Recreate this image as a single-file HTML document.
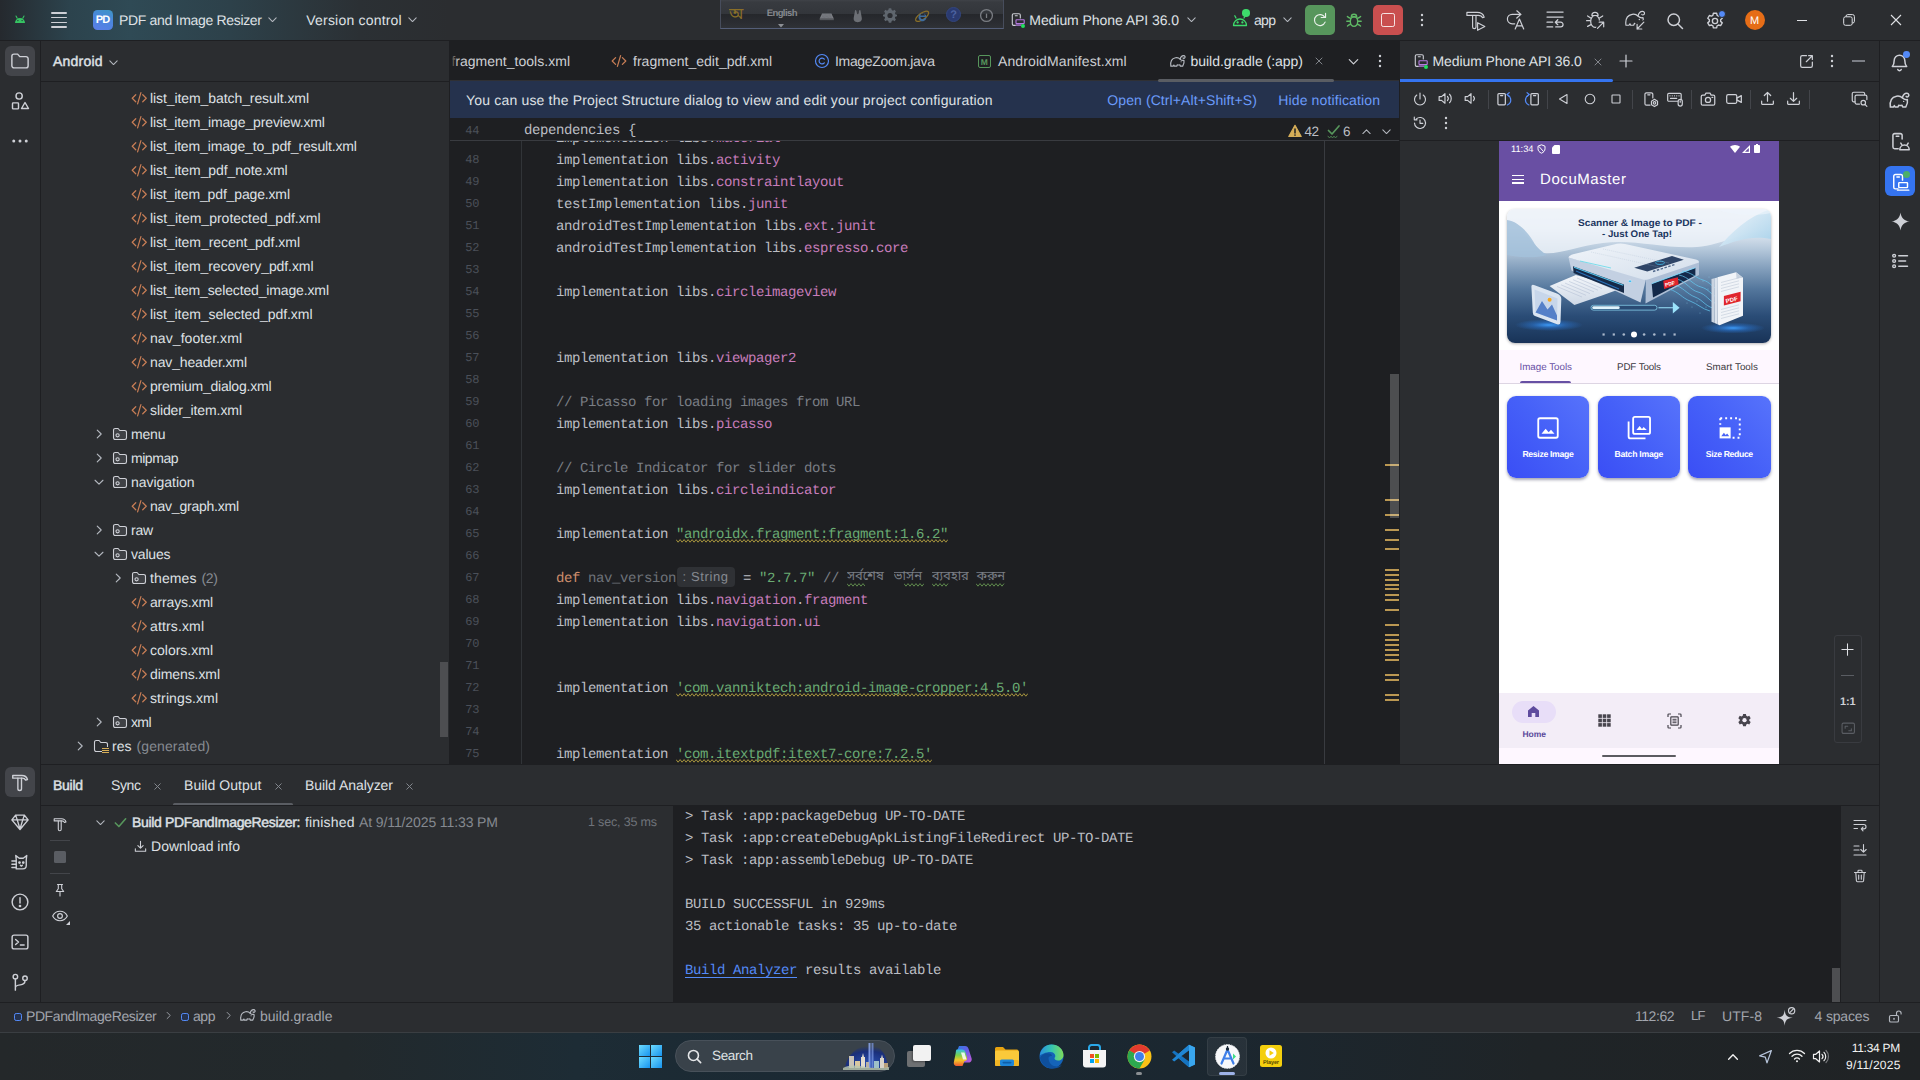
<!DOCTYPE html>
<html lang="en"><head><meta charset="utf-8"><title>build.gradle (:app) - PDF and Image Resizer</title>
<style>
html,body{margin:0;padding:0;background:#1E1F22;}
body{width:1920px;height:1080px;overflow:hidden;position:relative;font-family:"Liberation Sans",sans-serif;font-size:13.5px;color:#DFE1E5;text-rendering:geometricPrecision;}
#r{position:absolute;left:0;top:0;width:1920px;height:1080px;overflow:hidden;}
#r div,#r span,#r svg{position:absolute;box-sizing:border-box;}
#r span{white-space:pre;}
#r .rel, #r .rel *{position:static;}
</style></head>
<body><div id="r">
<div style="left:0px;top:0px;width:1920px;height:1080px;background:#2B2D30;"></div>
<div style="left:0px;top:0px;width:470px;height:40px;background:linear-gradient(90deg,#25292e 0px,#2c434d 70px,#2f4a55 130px,#2d414a 230px,#2b3034 360px,#2B2D30 450px);"></div>
<div style="left:0px;top:40px;width:1920px;height:1px;background:#1E1F22;"></div>
<div style="left:40px;top:41px;width:1px;height:962px;background:#1E1F22;"></div>
<div style="left:1879px;top:41px;width:1px;height:962px;background:#1E1F22;"></div>
<div style="left:449px;top:41px;width:951px;height:724px;background:#1E1F22;"></div>
<div style="left:1399px;top:41px;width:1px;height:724px;background:#1E1F22;"></div>
<div style="left:41px;top:764px;width:1838px;height:1px;background:#1E1F22;"></div>
<div style="left:0px;top:1002px;width:1920px;height:1px;background:#1E1F22;"></div>
<svg style="left:14px;top:14px" width="12" height="10" viewBox="0 0 12 10"><path d="M1 9a5 5 0 0 1 10 0z" fill="#36c463"/><path d="M3.200 4.200 2 2M8.800 4.200 10 2" stroke="#36c463" stroke-width="1.100" stroke-linecap="round"/><circle cx="3.900" cy="6.600" r=".7" fill="#1f3a33"/><circle cx="8.100" cy="6.600" r=".7" fill="#1f3a33"/></svg>
<div style="left:51px;top:12px;width:16px;height:1.6px;background:#CED0D6;border-radius:1px;"></div>
<div style="left:51px;top:16.8px;width:16px;height:1.6px;background:#CED0D6;border-radius:1px;"></div>
<div style="left:51px;top:21.5px;width:16px;height:1.6px;background:#CED0D6;border-radius:1px;"></div>
<div style="left:51px;top:26.2px;width:16px;height:1.6px;background:#CED0D6;border-radius:1px;"></div>
<div style="left:93px;top:10px;width:20px;height:20px;border-radius:4.5px;background:linear-gradient(200deg,#3f96c4 0%,#4a86dd 45%,#5b7ee8 100%);"></div>
<span style="left:95.80px;top:12.20px;height:16px;line-height:16px;font-size:11px;color:#fff;font-weight:700;letter-spacing:-0.881px;">PD</span>
<span style="left:119.00px;top:10.30px;height:20px;line-height:20px;font-size:14px;color:#DFE1E5;letter-spacing:-0.320px;">PDF and Image Resizer</span>
<svg style="left:266.00px;top:13.30px;" width="13" height="13" viewBox="0 0 16 16" fill="none" stroke="#B4B8BF" stroke-width="1.3" stroke-linecap="round" stroke-linejoin="round"><path d="M3.5 6 8 10.5 12.5 6"/></svg>
<span style="left:306.30px;top:10.30px;height:20px;line-height:20px;font-size:14px;color:#DFE1E5;letter-spacing:0.199px;">Version control</span>
<svg style="left:405.50px;top:13.30px;" width="13" height="13" viewBox="0 0 16 16" fill="none" stroke="#B4B8BF" stroke-width="1.3" stroke-linecap="round" stroke-linejoin="round"><path d="M3.5 6 8 10.5 12.5 6"/></svg>
<div style="left:719.5px;top:-1px;width:284.5px;height:30px;border:1px solid #474d5c;border-bottom-color:#545e78;border-top:none;background:linear-gradient(180deg,#43464c 0px,#383b40 3px,#33363b 14.500px,#25272b 15px,#2b2d32 24px,#303338 30px);"></div>
<span style="left:729.00px;top:4.00px;height:22px;line-height:22px;font-size:16px;color:#8a6f28;font-family:'Liberation Sans','Noto Sans Bengali','FreeSans',sans-serif;width:17px;overflow:hidden;">অ</span>
<span style="left:766.70px;top:7.70px;height:12px;line-height:12px;font-size:9.5px;color:#85888e;font-weight:700;letter-spacing:-0.585px;">English</span>
<svg style="left:778px;top:23.500px" width="6" height="4" viewBox="0 0 6 4"><path d="M0 0h6L3 3.500z" fill="#8d9096"/></svg>
<svg style="left:818.500px;top:13px" width="15.500" height="8.500" viewBox="0 0 16 9"><path d="M3 .5h10L15.500 6H.5z" fill="#7b7e84"/><rect x=".5" y="6" width="15" height="1.600" fill="#54575c"/><path d="M3.500 2h9M3 3.500h10M2.500 5h11" stroke="#55585e" stroke-width=".5" stroke-dasharray=".8 .6"/></svg>
<svg style="left:852px;top:9px" width="11.500" height="14.500" viewBox="0 0 14 18"><path d="M3.500 2.500C3.500 1 5 1 5.500 2.500L6 5h2l.5-2.500c.5-1.500 2-1.500 2 0L12 11c.5 3-1 5.500-5 5.500S1.500 14 2 11z" fill="#6c6f75"/><rect x="6" y="1.500" width="2" height="5" rx="1" fill="#3a3c41"/></svg>
<svg style="left:881.50px;top:7.30px;" width="16" height="16" viewBox="0 0 16 16" fill="none" stroke="none" stroke-width="1.2" stroke-linecap="round" stroke-linejoin="round"><path d="M8 1.200 9.200 1.300 9.700 3.100 11 3.700 12.600 2.800 13.900 4.400 12.900 5.900 13.300 7.200 15 7.700 15 9.300 13.300 9.800 12.900 11.100 13.900 12.600 12.600 14.200 11 13.300 9.700 13.900 9.200 15.700 6.800 15.700 6.300 13.900 5 13.300 3.400 14.200 2.100 12.600 3.100 11.100 2.700 9.800 1 9.300 1 7.700 2.700 7.200 3.100 5.900 2.100 4.400 3.400 2.800 5 3.700 6.300 3.100 6.800 1.300z" fill="#5f666e" stroke="none"/><circle cx="8" cy="8.500" r="2.600" fill="#2b2d32" stroke="none"/></svg>
<svg style="left:913.500px;top:6.500px" width="17" height="17" viewBox="0 0 21 20"><ellipse cx="10" cy="11" rx="9.500" ry="4" transform="rotate(-35 10 11)" fill="none" stroke="#8a6f28" stroke-width="1.600"/><path d="M15.500 12H7.800a3 3 0 0 0 5.600 1.200h2a5 5 0 1 1 .1-1.200zM7.800 10h5.600a2.800 2.800 0 0 0-5.600 0z" fill="#3f6c9c"/></svg>
<div style="left:945.8px;top:7.2px;width:15px;height:15px;background:#2a3a70;border-radius:50%;border:1px solid #33467f;"></div>
<span style="left:950.30px;top:7.90px;height:14px;line-height:14px;font-size:11px;color:#4d63a0;font-weight:700;">?</span>
<svg style="left:978.70px;top:7.50px;" width="15" height="15" viewBox="0 0 16 16" fill="none" stroke="#7a7d83" stroke-width="1.4" stroke-linecap="round" stroke-linejoin="round"><circle cx="8" cy="8" r="6.300"/><path d="M8 6.500v3.500"/></svg>
<svg style="left:1009.70px;top:12.40px;" width="16" height="16" viewBox="0 0 16 16" fill="none" stroke="#CED0D6" stroke-width="1.1" stroke-linecap="round" stroke-linejoin="round"><path d="M5.300 13.400H3.600A1.300 1.300 0 0 1 2.300 12.100V3.100A1.300 1.300 0 0 1 3.600 1.800h5.400A1.300 1.300 0 0 1 10.300 3.100V6" stroke="#CED0D6"/><path d="M5.300 3.800h2" stroke="#CED0D6"/><rect x="6" y="7.800" width="8.200" height="3.800" rx=".5" stroke="#B57BE0"/><path d="M6 13.100h5.300" stroke="#B57BE0"/></svg><div style="left:1021.1px;top:24.099999999999998px;width:4.2px;height:4.2px;background:#22E05E;border-radius:50%;"></div>
<span style="left:1029.30px;top:10.30px;height:20px;line-height:20px;font-size:14px;color:#DFE1E5;letter-spacing:-0.065px;">Medium Phone API 36.0</span>
<svg style="left:1184.50px;top:13.30px;" width="13" height="13" viewBox="0 0 16 16" fill="none" stroke="#B4B8BF" stroke-width="1.3" stroke-linecap="round" stroke-linejoin="round"><path d="M3.5 6 8 10.5 12.5 6"/></svg>
<svg style="left:1232px;top:10px" width="18" height="17" viewBox="0 0 18 17" fill="none" stroke="#3DDC6B" stroke-width="1.300" stroke-linecap="round" stroke-linejoin="round"><path d="M1.500 15.500a6.500 6.500 0 0 1 13 0zM4 8 2.800 5.800M12 8l1.200-2.200"/><circle cx="5.600" cy="12.400" r=".5" fill="#3DDC6B"/><circle cx="10.400" cy="12.400" r=".5" fill="#3DDC6B"/></svg>
<div style="left:1242.3px;top:9.3px;width:7.5px;height:7.5px;background:#3DDC6B;border-radius:50%;"></div>
<span style="left:1254.00px;top:10.30px;height:20px;line-height:20px;font-size:14px;color:#DFE1E5;letter-spacing:-0.680px;">app</span>
<svg style="left:1280.50px;top:13.30px;" width="13" height="13" viewBox="0 0 16 16" fill="none" stroke="#B4B8BF" stroke-width="1.3" stroke-linecap="round" stroke-linejoin="round"><path d="M3.5 6 8 10.5 12.5 6"/></svg>
<div style="left:1305px;top:5px;width:30px;height:30px;background:#57965C;border-radius:5px;"></div>
<svg style="left:1312.00px;top:12.00px;" width="16" height="16" viewBox="0 0 16 16" fill="none" stroke="#e9f1ea" stroke-width="1.15" stroke-linecap="round" stroke-linejoin="round"><path d="M13.100 10.100A5.500 5.500 0 1 1 12.800 5.400"/><path d="M13.550 1.400V5.500H9.200"/></svg>
<svg style="left:1346.00px;top:12.00px;" width="16" height="16" viewBox="0 0 16 16" fill="none" stroke="#5FB865" stroke-width="1.4" stroke-linecap="round" stroke-linejoin="round"><ellipse cx="8" cy="9.600" rx="3.700" ry="4.800"/><path d="M5.300 4.900A2.700 2.700 0 0 1 10.700 4.900z"/><path d="M4.500 6.300C3.400 6 2.300 5.400 1.400 4.500M4.200 9.300H.8M4.600 12.300C3.500 12.600 2.400 13.200 1.500 14M11.500 6.300C12.600 6 13.700 5.400 14.600 4.500M11.800 9.300h3.400M11.400 12.300c1.100.3 2.200.9 3.100 1.700"/></svg>
<div style="left:1373px;top:5px;width:30px;height:30px;background:#C94F4F;border-radius:5px;"></div>
<div style="left:1381.2px;top:13.2px;width:13.6px;height:13.6px;border:1.600px solid #f6e3e3;border-radius:2.200px;"></div>
<svg style="left:1414.00px;top:12.00px;" width="16" height="16" viewBox="0 0 16 16" fill="none" stroke="#CED0D6" stroke-width="1.2" stroke-linecap="round" stroke-linejoin="round"><g fill="#CED0D6" stroke="none"><circle cx="8" cy="3" r="1.2"/><circle cx="8" cy="8" r="1.2"/><circle cx="8" cy="13" r="1.2"/></g></svg>
<svg style="left:1465.50px;top:10.50px;" width="20" height="20" viewBox="0 0 20 20" fill="none" stroke="#CED0D6" stroke-width="1.15" stroke-linecap="round" stroke-linejoin="round"><path d="M.9 1.400h10.300c3.300 0 6 1.700 7 4.700l-1.600.6c-.8-1.700-2.400-2.300-4.300-2.300H.9z"/><path d="M6.600 5v10.900a1.700 1.700 0 0 0 3.400 0V5"/><path d="M11.600 11.700v7.600l7.200-3.800z" fill="#2B2D30"/></svg>
<svg style="left:1505.00px;top:10.00px;" width="20" height="20" viewBox="0 0 20 20" fill="none" stroke="#CED0D6" stroke-width="1.2" stroke-linecap="round" stroke-linejoin="round"><path d="M15.900 4.400H7.100a4.700 4.700 0 0 0 0 9.400h2.600M11.800.8l4.100 3.600-4.100 3.600"/><path d="M10.200 19 14.450 9l4.250 10M11.700 15.800h5.500"/></svg>
<svg style="left:1545.00px;top:10.00px;" width="20" height="20" viewBox="0 0 20 20" fill="none" stroke="#CED0D6" stroke-width="1.25" stroke-linecap="round" stroke-linejoin="round"><path d="M2 2.100h16.100M2 7h16.100M2 12.200h5.700M2 16.900h5.700"/><path d="M10.500 12.200h5.200a2.350 2.350 0 0 1 0 4.700h-5M12.800 9.700l-2.500 2.500 2.500 2.500"/></svg>
<svg style="left:1585.00px;top:10.00px;" width="20" height="20" viewBox="0 0 20 20" fill="none" stroke="#CED0D6" stroke-width="1.2" stroke-linecap="round" stroke-linejoin="round"><path d="M6.900 5.500a3.100 3.100 0 0 1 6.200 0z"/><path d="M11.500 17.300c-.5.100-.9.100-1.400.100-2.400 0-4.400-2.700-4.400-6S7.700 5.500 10.100 5.500s4.400 2.600 4.400 5.500"/><path d="M5.700 8 2.600 5.900M5.200 10.700H1.600M6 14.600l-3.400 1.800M14.500 8l3.200-2.100"/><path d="M12.500 18.400l6.200-6.200M14.200 12.200h4.500v4.600" stroke="#2B2D30" stroke-width="3.600"/><path d="M12.500 18.400l6.200-6.200M14.200 12.200h4.500v4.600"/></svg>
<svg style="left:1625.00px;top:10.00px;" width="20" height="20" viewBox="0 0 20 20" fill="none" stroke="#CED0D6" stroke-width="1.2" stroke-linecap="round" stroke-linejoin="round"><g transform="translate(-1.400 -1.900) scale(1.380)" stroke-width=".85"><path d="M1.700 12.400C1.200 8.600 2.400 5.200 6.200 4.500 7.900 4.200 9.400 4.700 10.400 5.700 11.600 6.900 12.600 7.300 14.100 6.900 14.500 8.900 13.900 10.800 12.900 12.400H10.700L10.200 11.100C9.400 11.350 8.600 11.350 7.800 11.100L7.300 12.400H5.100L4.600 11.300 3.900 12.400Z"/><path d="M10.400 5.700C11 3.600 12.300 2.300 13.800 2.400 15.100 2.500 15.500 3.800 14.800 4.600 14.300 5.200 13.500 5.100 13.200 4.600"/><circle cx="11.400" cy="8.300" r=".5" fill="#CED0D6" stroke="none"/></g><path d="M18.850 12.200 12.100 19M12.100 14.300V19h4.700" stroke="#2B2D30" stroke-width="4"/><path d="M18.850 12.200 12.100 19M12.100 14.300V19h4.700"/></svg>
<svg style="left:1665.00px;top:10.50px;" width="20" height="20" viewBox="0 0 16 16" fill="none" stroke="#CED0D6" stroke-width="1.2" stroke-linecap="round" stroke-linejoin="round"><circle cx="7" cy="7" r="4.6"/><path d="M10.400 10.400l3.600 3.600"/></svg>
<svg style="left:1704.50px;top:10.50px;" width="20" height="20" viewBox="0 0 16 16" fill="none" stroke="#CED0D6" stroke-width="1.1" stroke-linecap="round" stroke-linejoin="round"><circle cx="8" cy="8" r="2.100"/><path d="M6.700 1.800h2.600l.4 1.700 1.100.6 1.700-.5 1.300 2.200-1.300 1.200v1.300l1.300 1.200-1.300 2.200-1.700-.5-1.100.6-.4 1.700H6.700l-.4-1.700-1.100-.6-1.700.5-1.300-2.200 1.300-1.200V7l-1.300-1.200 1.300-2.200 1.700.5 1.100-.6z"/></svg>
<div style="left:1718px;top:10px;width:8px;height:8px;background:#548AF7;border-radius:50%;border:1px solid #2B2D30;"></div>
<div style="left:1745px;top:10px;width:20px;height:20px;background:#E66D17;border-radius:50%;"></div>
<span style="left:1750.00px;top:14.10px;height:14px;line-height:14px;font-size:11px;color:#fff;">M</span>
<div style="left:1797px;top:19.5px;width:10px;height:1.2px;background:#DFE1E5;"></div>
<svg style="left:1843px;top:14px" width="12" height="12" viewBox="0 0 12 12" fill="none" stroke="#DFE1E5" stroke-width="1"><rect x=".7" y="2.800" width="8.500" height="8.500" rx="1.800"/><path d="M3 2.800V2.300A1.700 1.700 0 0 1 4.700.6h4.800a1.900 1.900 0 0 1 1.900 1.900v4.800a1.700 1.700 0 0 1-1.700 1.700h-.4"/></svg>
<svg style="left:1890px;top:14px" width="12" height="12" viewBox="0 0 12 12" fill="none" stroke="#DFE1E5" stroke-width="1.100"><path d="M1 1l10 10M11 1 1 11"/></svg>
<div style="left:5px;top:46px;width:30px;height:30px;background:#43454A;border-radius:6px;"></div>
<svg style="left:10.00px;top:51.00px;" width="20" height="20" viewBox="0 0 16 16" fill="none" stroke="#CED0D6" stroke-width="1.15" stroke-linecap="round" stroke-linejoin="round"><path d="M1.5 4.2A1.7 1.7 0 0 1 3.2 2.5h2.9l1.7 2h5A1.7 1.7 0 0 1 14.5 6.2v5.6a1.7 1.7 0 0 1-1.7 1.7H3.2a1.7 1.7 0 0 1-1.7-1.7z"/></svg>
<svg style="left:10.00px;top:91.00px;" width="20" height="20" viewBox="0 0 16 16" fill="none" stroke="#CED0D6" stroke-width="1.15" stroke-linecap="round" stroke-linejoin="round"><circle cx="7.3" cy="4" r="2.5"/><rect x="2" y="9.5" width="4.8" height="4.8" rx=".6"/><path d="M12 9.2 14.8 14H9.2z"/></svg>
<svg style="left:10.00px;top:131.00px;" width="20" height="20" viewBox="0 0 16 16" fill="none" stroke="#CED0D6" stroke-width="1.2" stroke-linecap="round" stroke-linejoin="round"><g fill="#CED0D6" stroke="none"><circle cx="3" cy="8" r="1.2"/><circle cx="8" cy="8" r="1.2"/><circle cx="13" cy="8" r="1.2"/></g></svg>
<div style="left:5px;top:767px;width:30px;height:30px;background:#43454A;border-radius:6px;"></div>
<svg style="left:10.00px;top:772.00px;" width="20" height="20" viewBox="0 0 16 16" fill="none" stroke="#CED0D6" stroke-width="1.1" stroke-linecap="round" stroke-linejoin="round"><path d="M2.200 2.800h7.300c2.300 0 3.900 1.200 4.500 3.200l-1.500.5c-.5-1.100-1.500-1.600-2.700-1.600H2.200z"/><path d="M6.300 5v8.300a1.450 1.450 0 0 0 2.900 0V5"/></svg>
<svg style="left:10.00px;top:812.00px;" width="20" height="20" viewBox="0 0 16 16" fill="none" stroke="#CED0D6" stroke-width="1.1" stroke-linecap="round" stroke-linejoin="round"><path d="M4.5 2.5h7L14.5 6.3 8 14 1.5 6.3zM1.5 6.3h13M5.8 6.3 8 13.6 10.2 6.3M4.5 2.5l1.3 3.8M11.5 2.5l-1.3 3.8"/></svg>
<svg style="left:10.00px;top:852.00px;" width="20" height="20" viewBox="0 0 16 16" fill="none" stroke="#CED0D6" stroke-width="1.1" stroke-linecap="round" stroke-linejoin="round"><path d="M5 13.5V6.2L4.6 2.8 7.4 5h3.2l2.8-2.2-.4 3.4v4.6a2.7 2.7 0 0 1-2.7 2.7z"/><path d="M1.5 7.2h3.3M1.5 9.8h3.3M1.5 12.4h3.3" /><circle cx="7.6" cy="8.4" r=".55" fill="#CED0D6"/><circle cx="10.6" cy="8.4" r=".55" fill="#CED0D6"/><path d="M8.3 10.6l.8.7.8-.7"/></svg>
<svg style="left:10.00px;top:892.00px;" width="20" height="20" viewBox="0 0 16 16" fill="none" stroke="#CED0D6" stroke-width="1.15" stroke-linecap="round" stroke-linejoin="round"><circle cx="8" cy="8" r="6.3"/><path d="M8 4.6v4.2"/><circle cx="8" cy="11.2" r=".5" fill="#CED0D6"/></svg>
<svg style="left:10.00px;top:932.00px;" width="20" height="20" viewBox="0 0 16 16" fill="none" stroke="#CED0D6" stroke-width="1.15" stroke-linecap="round" stroke-linejoin="round"><rect x="1.7" y="2.5" width="12.6" height="11" rx="1.6"/><path d="M4.5 6l2.3 2-2.3 2M8.3 10.4h3"/></svg>
<svg style="left:10.00px;top:972.00px;" width="20" height="20" viewBox="0 0 16 16" fill="none" stroke="#CED0D6" stroke-width="1.15" stroke-linecap="round" stroke-linejoin="round"><circle cx="4.300" cy="3.700" r="1.800"/><circle cx="12" cy="5" r="1.800"/><path d="M4.300 5.500v9M12 6.800c0 2.300-1.800 3.300-3.800 3.500-2 .2-3.900.6-3.900 2.200"/></svg>
<svg style="left:1888.30px;top:50.00px;" width="23" height="23" viewBox="0 0 16 16" fill="none" stroke="#CED0D6" stroke-width="1.05" stroke-linecap="round" stroke-linejoin="round"><path d="M3 11.5c1-1 1.3-2 1.3-4.2a3.7 3.7 0 0 1 7.4 0c0 2.200.3 3.200 1.300 4.200z"/><path d="M6.800 13.600a1.300 1.300 0 0 0 2.400 0" /></svg>
<div style="left:1903.3px;top:51px;width:6.8px;height:6.8px;background:#548AF7;border-radius:50%;"></div>
<svg style="left:1888.30px;top:90.30px;" width="22" height="22" viewBox="0 0 16 16" fill="none" stroke="#CED0D6" stroke-width="1.1" stroke-linecap="round" stroke-linejoin="round"><path d="M1.700 12.400C1.200 8.600 2.400 5.200 6.200 4.500 7.900 4.200 9.400 4.700 10.400 5.700 11.600 6.900 12.600 7.300 14.100 6.900 14.500 8.900 13.900 10.800 12.900 12.400H10.700L10.200 11.100C9.400 11.350 8.600 11.350 7.800 11.100L7.300 12.400H5.100L4.600 11.300 3.900 12.400Z"/><path d="M10.400 5.700C11 3.600 12.300 2.300 13.800 2.400 15.100 2.500 15.500 3.800 14.800 4.600 14.300 5.200 13.500 5.100 13.200 4.600"/><circle cx="11.400" cy="8.300" r=".5" fill="#CED0D6" stroke="none"/></svg>
<svg style="left:1888.80px;top:131.00px;" width="21" height="21" viewBox="0 0 16 16" fill="none" stroke="#CED0D6" stroke-width="1.15" stroke-linecap="round" stroke-linejoin="round"><path d="M7 13.500H4.300A1.300 1.300 0 0 1 3 12.200V3.300A1.300 1.300 0 0 1 4.300 2h4.400A1.300 1.300 0 0 1 10 3.300V6M5.500 4h2"/><path d="M8.200 14.300a3.600 3.600 0 0 1 7.200 0zM9.800 10.500l-.8-1.300M13.800 10.500l.8-1.300"/></svg>
<div style="left:1885px;top:166px;width:30px;height:30px;background:#3574F0;border-radius:6px;"></div>
<svg style="left:1890.00px;top:171.50px;" width="20" height="20" viewBox="0 0 16 16" fill="none" stroke="#fff" stroke-width="1.15" stroke-linecap="round" stroke-linejoin="round"><path d="M6.500 13.500H4.300A1.300 1.300 0 0 1 3 12.200V3.300A1.300 1.300 0 0 1 4.300 2h4.400A1.300 1.300 0 0 1 10 3.300V6.500M5.500 4h2"/><rect x="7" y="8.500" width="7" height="4" rx=".5"/><path d="M6 14.500h9"/></svg>
<div style="left:1903px;top:171px;width:7px;height:7px;background:#4CAF6A;border-radius:50%;"></div>
<svg style="left:1890.500px;top:212px" width="19" height="19" viewBox="0 0 20 20"><path d="M10 .5C10.600 6 14 9.400 19.500 10 14 10.600 10.600 14 10 19.500 9.400 14 6 10.600 .5 10 6 9.400 9.400 6 10 .5z" fill="#CED0D6"/></svg>
<svg style="left:1890.00px;top:251.00px;" width="20" height="20" viewBox="0 0 16 16" fill="none" stroke="#CED0D6" stroke-width="1.15" stroke-linecap="round" stroke-linejoin="round"><circle cx="3.300" cy="3.800" r="1.100"/><circle cx="3.300" cy="8" r="1.100"/><circle cx="3.300" cy="12.200" r="1.100"/><path d="M7 3.800h7M7 8h5.500M7 12.200h7"/></svg>
<span style="left:53.00px;top:51.00px;height:20px;line-height:20px;font-size:14px;color:#DFE1E5;letter-spacing:0.207px;-webkit-text-stroke:.45px #DFE1E5;">Android</span>
<svg style="left:106.50px;top:55.50px;" width="13" height="13" viewBox="0 0 16 16" fill="none" stroke="#B4B8BF" stroke-width="1.3" stroke-linecap="round" stroke-linejoin="round"><path d="M3.5 6 8 10.5 12.5 6"/></svg>
<div style="left:41px;top:81px;width:408px;height:1px;background:#1E1F22;"></div>
<svg style="left:130.75px;top:89.75px;" width="16.5" height="16.5" viewBox="0 0 16 16" fill="none" stroke="#C77D55" stroke-width="1.2" stroke-linecap="round" stroke-linejoin="round"><path d="M4.6 4.6 1.2 8l3.4 3.4M11.4 4.6 14.8 8l-3.4 3.4M9.6 2.6 6.4 13.4"/></svg>
<span style="left:150.00px;top:88.40px;height:20px;line-height:20px;font-size:14px;color:#DFE1E5;letter-spacing:-0.083px;">list_item_batch_result.xml</span>
<svg style="left:130.75px;top:113.75px;" width="16.5" height="16.5" viewBox="0 0 16 16" fill="none" stroke="#C77D55" stroke-width="1.2" stroke-linecap="round" stroke-linejoin="round"><path d="M4.6 4.6 1.2 8l3.4 3.4M11.4 4.6 14.8 8l-3.4 3.4M9.6 2.6 6.4 13.4"/></svg>
<span style="left:150.00px;top:112.40px;height:20px;line-height:20px;font-size:14px;color:#DFE1E5;letter-spacing:-0.123px;">list_item_image_preview.xml</span>
<svg style="left:130.75px;top:137.75px;" width="16.5" height="16.5" viewBox="0 0 16 16" fill="none" stroke="#C77D55" stroke-width="1.2" stroke-linecap="round" stroke-linejoin="round"><path d="M4.6 4.6 1.2 8l3.4 3.4M11.4 4.6 14.8 8l-3.4 3.4M9.6 2.6 6.4 13.4"/></svg>
<span style="left:150.00px;top:136.40px;height:20px;line-height:20px;font-size:14px;color:#DFE1E5;letter-spacing:-0.146px;">list_item_image_to_pdf_result.xml</span>
<svg style="left:130.75px;top:161.75px;" width="16.5" height="16.5" viewBox="0 0 16 16" fill="none" stroke="#C77D55" stroke-width="1.2" stroke-linecap="round" stroke-linejoin="round"><path d="M4.6 4.6 1.2 8l3.4 3.4M11.4 4.6 14.8 8l-3.4 3.4M9.6 2.6 6.4 13.4"/></svg>
<span style="left:150.00px;top:160.40px;height:20px;line-height:20px;font-size:14px;color:#DFE1E5;letter-spacing:-0.076px;">list_item_pdf_note.xml</span>
<svg style="left:130.75px;top:185.75px;" width="16.5" height="16.5" viewBox="0 0 16 16" fill="none" stroke="#C77D55" stroke-width="1.2" stroke-linecap="round" stroke-linejoin="round"><path d="M4.6 4.6 1.2 8l3.4 3.4M11.4 4.6 14.8 8l-3.4 3.4M9.6 2.6 6.4 13.4"/></svg>
<span style="left:150.00px;top:184.40px;height:20px;line-height:20px;font-size:14px;color:#DFE1E5;letter-spacing:-0.152px;">list_item_pdf_page.xml</span>
<svg style="left:130.75px;top:209.75px;" width="16.5" height="16.5" viewBox="0 0 16 16" fill="none" stroke="#C77D55" stroke-width="1.2" stroke-linecap="round" stroke-linejoin="round"><path d="M4.6 4.6 1.2 8l3.4 3.4M11.4 4.6 14.8 8l-3.4 3.4M9.6 2.6 6.4 13.4"/></svg>
<span style="left:150.00px;top:208.40px;height:20px;line-height:20px;font-size:14px;color:#DFE1E5;letter-spacing:0.003px;">list_item_protected_pdf.xml</span>
<svg style="left:130.75px;top:233.75px;" width="16.5" height="16.5" viewBox="0 0 16 16" fill="none" stroke="#C77D55" stroke-width="1.2" stroke-linecap="round" stroke-linejoin="round"><path d="M4.6 4.6 1.2 8l3.4 3.4M11.4 4.6 14.8 8l-3.4 3.4M9.6 2.6 6.4 13.4"/></svg>
<span style="left:150.00px;top:232.40px;height:20px;line-height:20px;font-size:14px;color:#DFE1E5;letter-spacing:-0.042px;">list_item_recent_pdf.xml</span>
<svg style="left:130.75px;top:257.75px;" width="16.5" height="16.5" viewBox="0 0 16 16" fill="none" stroke="#C77D55" stroke-width="1.2" stroke-linecap="round" stroke-linejoin="round"><path d="M4.6 4.6 1.2 8l3.4 3.4M11.4 4.6 14.8 8l-3.4 3.4M9.6 2.6 6.4 13.4"/></svg>
<span style="left:150.00px;top:256.40px;height:20px;line-height:20px;font-size:14px;color:#DFE1E5;letter-spacing:-0.089px;">list_item_recovery_pdf.xml</span>
<svg style="left:130.75px;top:281.75px;" width="16.5" height="16.5" viewBox="0 0 16 16" fill="none" stroke="#C77D55" stroke-width="1.2" stroke-linecap="round" stroke-linejoin="round"><path d="M4.6 4.6 1.2 8l3.4 3.4M11.4 4.6 14.8 8l-3.4 3.4M9.6 2.6 6.4 13.4"/></svg>
<span style="left:150.00px;top:280.40px;height:20px;line-height:20px;font-size:14px;color:#DFE1E5;letter-spacing:-0.143px;">list_item_selected_image.xml</span>
<svg style="left:130.75px;top:305.75px;" width="16.5" height="16.5" viewBox="0 0 16 16" fill="none" stroke="#C77D55" stroke-width="1.2" stroke-linecap="round" stroke-linejoin="round"><path d="M4.6 4.6 1.2 8l3.4 3.4M11.4 4.6 14.8 8l-3.4 3.4M9.6 2.6 6.4 13.4"/></svg>
<span style="left:150.00px;top:304.40px;height:20px;line-height:20px;font-size:14px;color:#DFE1E5;letter-spacing:-0.068px;">list_item_selected_pdf.xml</span>
<svg style="left:130.75px;top:329.75px;" width="16.5" height="16.5" viewBox="0 0 16 16" fill="none" stroke="#C77D55" stroke-width="1.2" stroke-linecap="round" stroke-linejoin="round"><path d="M4.6 4.6 1.2 8l3.4 3.4M11.4 4.6 14.8 8l-3.4 3.4M9.6 2.6 6.4 13.4"/></svg>
<span style="left:150.00px;top:328.40px;height:20px;line-height:20px;font-size:14px;color:#DFE1E5;letter-spacing:0.073px;">nav_footer.xml</span>
<svg style="left:130.75px;top:353.75px;" width="16.5" height="16.5" viewBox="0 0 16 16" fill="none" stroke="#C77D55" stroke-width="1.2" stroke-linecap="round" stroke-linejoin="round"><path d="M4.6 4.6 1.2 8l3.4 3.4M11.4 4.6 14.8 8l-3.4 3.4M9.6 2.6 6.4 13.4"/></svg>
<span style="left:150.00px;top:352.40px;height:20px;line-height:20px;font-size:14px;color:#DFE1E5;letter-spacing:-0.142px;">nav_header.xml</span>
<svg style="left:130.75px;top:377.75px;" width="16.5" height="16.5" viewBox="0 0 16 16" fill="none" stroke="#C77D55" stroke-width="1.2" stroke-linecap="round" stroke-linejoin="round"><path d="M4.6 4.6 1.2 8l3.4 3.4M11.4 4.6 14.8 8l-3.4 3.4M9.6 2.6 6.4 13.4"/></svg>
<span style="left:150.00px;top:376.40px;height:20px;line-height:20px;font-size:14px;color:#DFE1E5;letter-spacing:-0.222px;">premium_dialog.xml</span>
<svg style="left:130.75px;top:401.75px;" width="16.5" height="16.5" viewBox="0 0 16 16" fill="none" stroke="#C77D55" stroke-width="1.2" stroke-linecap="round" stroke-linejoin="round"><path d="M4.6 4.6 1.2 8l3.4 3.4M11.4 4.6 14.8 8l-3.4 3.4M9.6 2.6 6.4 13.4"/></svg>
<span style="left:150.00px;top:400.40px;height:20px;line-height:20px;font-size:14px;color:#DFE1E5;letter-spacing:-0.097px;">slider_item.xml</span>
<svg style="left:92.00px;top:427.00px;" width="14" height="14" viewBox="0 0 16 16" fill="none" stroke="#B4B8BF" stroke-width="1.3" stroke-linecap="round" stroke-linejoin="round"><path d="M6 3.5 10.5 8 6 12.5"/></svg>
<svg style="left:112.00px;top:426.00px;" width="16" height="16" viewBox="0 0 16 16" fill="none" stroke="#CED0D6" stroke-width="1.1" stroke-linecap="round" stroke-linejoin="round"><path fill="#3f4145" d="M1.5 4.2A1.7 1.7 0 0 1 3.2 2.5h2.9l1.7 2h5A1.7 1.7 0 0 1 14.5 6.2v5.6a1.7 1.7 0 0 1-1.7 1.7H3.2a1.7 1.7 0 0 1-1.7-1.7z"/><circle cx="5.6" cy="9.3" r="1.6"/></svg>
<span style="left:131.00px;top:424.40px;height:20px;line-height:20px;font-size:14px;color:#DFE1E5;letter-spacing:-0.174px;">menu</span>
<svg style="left:92.00px;top:451.00px;" width="14" height="14" viewBox="0 0 16 16" fill="none" stroke="#B4B8BF" stroke-width="1.3" stroke-linecap="round" stroke-linejoin="round"><path d="M6 3.5 10.5 8 6 12.5"/></svg>
<svg style="left:112.00px;top:450.00px;" width="16" height="16" viewBox="0 0 16 16" fill="none" stroke="#CED0D6" stroke-width="1.1" stroke-linecap="round" stroke-linejoin="round"><path fill="#3f4145" d="M1.5 4.2A1.7 1.7 0 0 1 3.2 2.5h2.9l1.7 2h5A1.7 1.7 0 0 1 14.5 6.2v5.6a1.7 1.7 0 0 1-1.7 1.7H3.2a1.7 1.7 0 0 1-1.7-1.7z"/><circle cx="5.6" cy="9.3" r="1.6"/></svg>
<span style="left:131.00px;top:448.40px;height:20px;line-height:20px;font-size:14px;color:#DFE1E5;letter-spacing:-0.459px;">mipmap</span>
<svg style="left:92.00px;top:475.00px;" width="14" height="14" viewBox="0 0 16 16" fill="none" stroke="#B4B8BF" stroke-width="1.3" stroke-linecap="round" stroke-linejoin="round"><path d="M3.5 6 8 10.5 12.5 6"/></svg>
<svg style="left:112.00px;top:474.00px;" width="16" height="16" viewBox="0 0 16 16" fill="none" stroke="#CED0D6" stroke-width="1.1" stroke-linecap="round" stroke-linejoin="round"><path fill="#3f4145" d="M1.5 4.2A1.7 1.7 0 0 1 3.2 2.5h2.9l1.7 2h5A1.7 1.7 0 0 1 14.5 6.2v5.6a1.7 1.7 0 0 1-1.7 1.7H3.2a1.7 1.7 0 0 1-1.7-1.7z"/><circle cx="5.6" cy="9.3" r="1.6"/></svg>
<span style="left:131.00px;top:472.40px;height:20px;line-height:20px;font-size:14px;color:#DFE1E5;letter-spacing:-0.037px;">navigation</span>
<svg style="left:130.75px;top:497.75px;" width="16.5" height="16.5" viewBox="0 0 16 16" fill="none" stroke="#C77D55" stroke-width="1.2" stroke-linecap="round" stroke-linejoin="round"><path d="M4.6 4.6 1.2 8l3.4 3.4M11.4 4.6 14.8 8l-3.4 3.4M9.6 2.6 6.4 13.4"/></svg>
<span style="left:150.00px;top:496.40px;height:20px;line-height:20px;font-size:14px;color:#DFE1E5;letter-spacing:-0.236px;">nav_graph.xml</span>
<svg style="left:92.00px;top:523.00px;" width="14" height="14" viewBox="0 0 16 16" fill="none" stroke="#B4B8BF" stroke-width="1.3" stroke-linecap="round" stroke-linejoin="round"><path d="M6 3.5 10.5 8 6 12.5"/></svg>
<svg style="left:112.00px;top:522.00px;" width="16" height="16" viewBox="0 0 16 16" fill="none" stroke="#CED0D6" stroke-width="1.1" stroke-linecap="round" stroke-linejoin="round"><path fill="#3f4145" d="M1.5 4.2A1.7 1.7 0 0 1 3.2 2.5h2.9l1.7 2h5A1.7 1.7 0 0 1 14.5 6.2v5.6a1.7 1.7 0 0 1-1.7 1.7H3.2a1.7 1.7 0 0 1-1.7-1.7z"/><circle cx="5.6" cy="9.3" r="1.6"/></svg>
<span style="left:131.00px;top:520.40px;height:20px;line-height:20px;font-size:14px;color:#DFE1E5;letter-spacing:-0.280px;">raw</span>
<svg style="left:92.00px;top:547.00px;" width="14" height="14" viewBox="0 0 16 16" fill="none" stroke="#B4B8BF" stroke-width="1.3" stroke-linecap="round" stroke-linejoin="round"><path d="M3.5 6 8 10.5 12.5 6"/></svg>
<svg style="left:112.00px;top:546.00px;" width="16" height="16" viewBox="0 0 16 16" fill="none" stroke="#CED0D6" stroke-width="1.1" stroke-linecap="round" stroke-linejoin="round"><path fill="#3f4145" d="M1.5 4.2A1.7 1.7 0 0 1 3.2 2.5h2.9l1.7 2h5A1.7 1.7 0 0 1 14.5 6.2v5.6a1.7 1.7 0 0 1-1.7 1.7H3.2a1.7 1.7 0 0 1-1.7-1.7z"/><circle cx="5.6" cy="9.3" r="1.6"/></svg>
<span style="left:131.00px;top:544.40px;height:20px;line-height:20px;font-size:14px;color:#DFE1E5;letter-spacing:-0.194px;">values</span>
<svg style="left:111.00px;top:571.00px;" width="14" height="14" viewBox="0 0 16 16" fill="none" stroke="#B4B8BF" stroke-width="1.3" stroke-linecap="round" stroke-linejoin="round"><path d="M6 3.5 10.5 8 6 12.5"/></svg>
<svg style="left:131.00px;top:570.00px;" width="16" height="16" viewBox="0 0 16 16" fill="none" stroke="#CED0D6" stroke-width="1.1" stroke-linecap="round" stroke-linejoin="round"><path fill="#3f4145" d="M1.5 4.2A1.7 1.7 0 0 1 3.2 2.5h2.9l1.7 2h5A1.7 1.7 0 0 1 14.5 6.2v5.6a1.7 1.7 0 0 1-1.7 1.7H3.2a1.7 1.7 0 0 1-1.7-1.7z"/><circle cx="5.6" cy="9.3" r="1.6"/></svg>
<span style="left:150.00px;top:568.40px;height:20px;line-height:20px;font-size:14px;color:#DFE1E5;letter-spacing:0.118px;">themes</span>
<span style="left:201.50px;top:568.40px;height:20px;line-height:20px;font-size:14px;color:#868A91;letter-spacing:-0.306px;">(2)</span>
<svg style="left:130.75px;top:593.75px;" width="16.5" height="16.5" viewBox="0 0 16 16" fill="none" stroke="#C77D55" stroke-width="1.2" stroke-linecap="round" stroke-linejoin="round"><path d="M4.6 4.6 1.2 8l3.4 3.4M11.4 4.6 14.8 8l-3.4 3.4M9.6 2.6 6.4 13.4"/></svg>
<span style="left:150.00px;top:592.40px;height:20px;line-height:20px;font-size:14px;color:#DFE1E5;letter-spacing:-0.173px;">arrays.xml</span>
<svg style="left:130.75px;top:617.75px;" width="16.5" height="16.5" viewBox="0 0 16 16" fill="none" stroke="#C77D55" stroke-width="1.2" stroke-linecap="round" stroke-linejoin="round"><path d="M4.6 4.6 1.2 8l3.4 3.4M11.4 4.6 14.8 8l-3.4 3.4M9.6 2.6 6.4 13.4"/></svg>
<span style="left:150.00px;top:616.40px;height:20px;line-height:20px;font-size:14px;color:#DFE1E5;letter-spacing:0.139px;">attrs.xml</span>
<svg style="left:130.75px;top:641.75px;" width="16.5" height="16.5" viewBox="0 0 16 16" fill="none" stroke="#C77D55" stroke-width="1.2" stroke-linecap="round" stroke-linejoin="round"><path d="M4.6 4.6 1.2 8l3.4 3.4M11.4 4.6 14.8 8l-3.4 3.4M9.6 2.6 6.4 13.4"/></svg>
<span style="left:150.00px;top:640.40px;height:20px;line-height:20px;font-size:14px;color:#DFE1E5;letter-spacing:-0.001px;">colors.xml</span>
<svg style="left:130.75px;top:665.75px;" width="16.5" height="16.5" viewBox="0 0 16 16" fill="none" stroke="#C77D55" stroke-width="1.2" stroke-linecap="round" stroke-linejoin="round"><path d="M4.6 4.6 1.2 8l3.4 3.4M11.4 4.6 14.8 8l-3.4 3.4M9.6 2.6 6.4 13.4"/></svg>
<span style="left:150.00px;top:664.40px;height:20px;line-height:20px;font-size:14px;color:#DFE1E5;letter-spacing:-0.088px;">dimens.xml</span>
<svg style="left:130.75px;top:689.75px;" width="16.5" height="16.5" viewBox="0 0 16 16" fill="none" stroke="#C77D55" stroke-width="1.2" stroke-linecap="round" stroke-linejoin="round"><path d="M4.6 4.6 1.2 8l3.4 3.4M11.4 4.6 14.8 8l-3.4 3.4M9.6 2.6 6.4 13.4"/></svg>
<span style="left:150.00px;top:688.40px;height:20px;line-height:20px;font-size:14px;color:#DFE1E5;letter-spacing:0.110px;">strings.xml</span>
<svg style="left:92.00px;top:715.00px;" width="14" height="14" viewBox="0 0 16 16" fill="none" stroke="#B4B8BF" stroke-width="1.3" stroke-linecap="round" stroke-linejoin="round"><path d="M6 3.5 10.5 8 6 12.5"/></svg>
<svg style="left:112.00px;top:714.00px;" width="16" height="16" viewBox="0 0 16 16" fill="none" stroke="#CED0D6" stroke-width="1.1" stroke-linecap="round" stroke-linejoin="round"><path fill="#3f4145" d="M1.5 4.2A1.7 1.7 0 0 1 3.2 2.5h2.9l1.7 2h5A1.7 1.7 0 0 1 14.5 6.2v5.6a1.7 1.7 0 0 1-1.7 1.7H3.2a1.7 1.7 0 0 1-1.7-1.7z"/><circle cx="5.6" cy="9.3" r="1.6"/></svg>
<span style="left:131.00px;top:712.40px;height:20px;line-height:20px;font-size:14px;color:#DFE1E5;letter-spacing:-0.637px;">xml</span>
<svg style="left:73.00px;top:739.00px;" width="14" height="14" viewBox="0 0 16 16" fill="none" stroke="#B4B8BF" stroke-width="1.3" stroke-linecap="round" stroke-linejoin="round"><path d="M6 3.5 10.5 8 6 12.5"/></svg>
<svg style="left:93.00px;top:738.00px;" width="16" height="16" viewBox="0 0 16 16" fill="none" stroke="#CED0D6" stroke-width="1.1" stroke-linecap="round" stroke-linejoin="round"><path d="M1.5 4.2A1.7 1.7 0 0 1 3.2 2.5h2.9l1.7 2h5A1.7 1.7 0 0 1 14.5 6.2v5.6a1.7 1.7 0 0 1-1.7 1.7H3.2a1.7 1.7 0 0 1-1.7-1.7z"/></svg>
<div style="left:101.7px;top:747.3px;width:7.5px;height:6.2px;background:#2B2D30;"></div>
<div style="left:102.3px;top:748px;width:6.5px;height:1.1px;background:#D6AE58;"></div>
<div style="left:102.3px;top:750px;width:6.5px;height:1.1px;background:#D6AE58;"></div>
<div style="left:102.3px;top:752px;width:6.5px;height:1.1px;background:#D6AE58;"></div>
<span style="left:112.00px;top:736.40px;height:20px;line-height:20px;font-size:14px;color:#DFE1E5;letter-spacing:0.025px;">res</span>
<span style="left:136.50px;top:736.40px;height:20px;line-height:20px;font-size:14px;color:#868A91;letter-spacing:0.112px;">(generated)</span>
<div style="left:440px;top:662px;width:8px;height:75px;background:#4D4E51;"></div>
<div style="left:450px;top:80px;width:949px;height:1px;background:#2f3034;"></div>
<span style="left:451.30px;top:51.20px;height:20px;line-height:20px;font-size:14px;color:#CDCFD4;letter-spacing:0.025px;clip-path:inset(0 0 0 1px);">fragment_tools.xml</span>
<div style="left:450px;top:50px;width:8px;height:22px;background:linear-gradient(90deg,#1E1F22 10%,rgba(30,31,34,0) 100%);"></div>
<svg style="left:611.00px;top:53.00px;" width="16" height="16" viewBox="0 0 16 16" fill="none" stroke="#C77D55" stroke-width="1.25" stroke-linecap="round" stroke-linejoin="round"><path d="M4.6 4.6 1.2 8l3.4 3.4M11.4 4.6 14.8 8l-3.4 3.4M9.6 2.6 6.4 13.4"/></svg>
<span style="left:633.00px;top:51.20px;height:20px;line-height:20px;font-size:14px;color:#CDCFD4;letter-spacing:0.024px;">fragment_edit_pdf.xml</span>
<svg style="left:814.00px;top:53.00px;" width="16" height="16" viewBox="0 0 16 16" fill="none" stroke="#548AF7" stroke-width="1.2" stroke-linecap="round" stroke-linejoin="round"><circle cx="8" cy="8" r="6.500"/><path d="M10.300 6.200a2.900 2.900 0 1 0 0 3.600"/></svg>
<span style="left:835.00px;top:51.20px;height:20px;line-height:20px;font-size:14px;color:#CDCFD4;letter-spacing:-0.329px;">ImageZoom.java</span>
<div style="left:978px;top:54.5px;width:13px;height:13px;border:1.200px solid #57965C;border-radius:2px;"></div>
<span style="left:980.80px;top:55.80px;height:12px;line-height:12px;font-size:8.5px;color:#57965C;font-weight:700;">M</span>
<span style="left:998.00px;top:51.20px;height:20px;line-height:20px;font-size:14px;color:#CDCFD4;letter-spacing:0.104px;">AndroidManifest.xml</span>
<svg style="left:1168.50px;top:52.50px;" width="17" height="17" viewBox="0 0 16 16" fill="none" stroke="#B4B8BF" stroke-width="1.1" stroke-linecap="round" stroke-linejoin="round"><path d="M1.700 12.400C1.200 8.600 2.400 5.200 6.200 4.500 7.900 4.200 9.400 4.700 10.400 5.700 11.600 6.900 12.600 7.300 14.100 6.900 14.500 8.900 13.900 10.800 12.900 12.400H10.700L10.200 11.100C9.400 11.350 8.600 11.350 7.800 11.100L7.300 12.400H5.100L4.600 11.300 3.900 12.400Z"/><path d="M10.400 5.700C11 3.600 12.300 2.300 13.800 2.400 15.100 2.500 15.500 3.800 14.800 4.600 14.300 5.200 13.500 5.100 13.200 4.600"/><circle cx="11.400" cy="8.300" r=".5" fill="#CED0D6" stroke="none"/></svg>
<span style="left:1190.50px;top:51.20px;height:20px;line-height:20px;font-size:14px;color:#DFE1E5;letter-spacing:-0.020px;">build.gradle (:app)</span>
<svg style="left:1313.00px;top:55.00px;" width="12" height="12" viewBox="0 0 16 16" fill="none" stroke="#8b8e95" stroke-width="1.2" stroke-linecap="round" stroke-linejoin="round"><path d="M4 4l8 8M12 4l-8 8"/></svg>
<svg style="left:1346.00px;top:53.50px;" width="15" height="15" viewBox="0 0 16 16" fill="none" stroke="#CED0D6" stroke-width="1.3" stroke-linecap="round" stroke-linejoin="round"><path d="M3.5 6 8 10.5 12.5 6"/></svg>
<svg style="left:1372.00px;top:53.00px;" width="16" height="16" viewBox="0 0 16 16" fill="none" stroke="#CED0D6" stroke-width="1.2" stroke-linecap="round" stroke-linejoin="round"><g fill="#CED0D6" stroke="none"><circle cx="8" cy="3" r="1.2"/><circle cx="8" cy="8" r="1.2"/><circle cx="8" cy="13" r="1.2"/></g></svg>
<div style="left:450px;top:81px;width:949px;height:37px;background:#25324D;"></div>
<div style="left:1158px;top:78.5px;width:176px;height:3px;background:#5A5D63;border-radius:1.500px;"></div>
<span style="left:466.00px;top:89.60px;height:20px;line-height:20px;font-size:14px;color:#DFE1E5;letter-spacing:0.180px;">You can use the Project Structure dialog to view and edit your project configuration</span>
<span style="left:1107.30px;top:89.60px;height:20px;line-height:20px;font-size:14px;color:#6B9BFA;letter-spacing:0.093px;">Open (Ctrl+Alt+Shift+S)</span>
<span style="left:1278.25px;top:89.60px;height:20px;line-height:20px;font-size:14px;color:#6B9BFA;letter-spacing:0.133px;">Hide notification</span>
<div style="left:0;top:141px;width:1399px;height:623px;overflow:hidden;"><div style="left:0;top:-141px;width:1399px;height:1080px;"><span style="left:556.00px;top:127.57px;height:22px;line-height:22px;font-size:14px;color:#BCBEC4;font-family:'Liberation Mono',monospace;letter-spacing:-0.401px;">implementation libs.</span>
<span style="left:716.00px;top:127.57px;height:22px;line-height:22px;font-size:14px;color:#C77DBB;font-family:'Liberation Mono',monospace;letter-spacing:-0.401px;">material</span>
<span style="left:556.00px;top:149.57px;height:22px;line-height:22px;font-size:14px;color:#BCBEC4;font-family:'Liberation Mono',monospace;letter-spacing:-0.401px;">implementation libs.</span>
<span style="left:716.00px;top:149.57px;height:22px;line-height:22px;font-size:14px;color:#C77DBB;font-family:'Liberation Mono',monospace;letter-spacing:-0.401px;">activity</span>
<span style="left:556.00px;top:171.57px;height:22px;line-height:22px;font-size:14px;color:#BCBEC4;font-family:'Liberation Mono',monospace;letter-spacing:-0.401px;">implementation libs.</span>
<span style="left:716.00px;top:171.57px;height:22px;line-height:22px;font-size:14px;color:#C77DBB;font-family:'Liberation Mono',monospace;letter-spacing:-0.401px;">constraintlayout</span>
<span style="left:556.00px;top:193.57px;height:22px;line-height:22px;font-size:14px;color:#BCBEC4;font-family:'Liberation Mono',monospace;letter-spacing:-0.401px;">testImplementation libs.</span>
<span style="left:748.00px;top:193.57px;height:22px;line-height:22px;font-size:14px;color:#C77DBB;font-family:'Liberation Mono',monospace;letter-spacing:-0.401px;">junit</span>
<span style="left:556.00px;top:215.57px;height:22px;line-height:22px;font-size:14px;color:#BCBEC4;font-family:'Liberation Mono',monospace;letter-spacing:-0.401px;">androidTestImplementation libs.</span>
<span style="left:804.00px;top:215.57px;height:22px;line-height:22px;font-size:14px;color:#C77DBB;font-family:'Liberation Mono',monospace;letter-spacing:-0.401px;">ext</span>
<span style="left:828.00px;top:215.57px;height:22px;line-height:22px;font-size:14px;color:#BCBEC4;font-family:'Liberation Mono',monospace;letter-spacing:-0.401px;">.</span>
<span style="left:836.00px;top:215.57px;height:22px;line-height:22px;font-size:14px;color:#C77DBB;font-family:'Liberation Mono',monospace;letter-spacing:-0.401px;">junit</span>
<span style="left:556.00px;top:237.57px;height:22px;line-height:22px;font-size:14px;color:#BCBEC4;font-family:'Liberation Mono',monospace;letter-spacing:-0.401px;">androidTestImplementation libs.</span>
<span style="left:804.00px;top:237.57px;height:22px;line-height:22px;font-size:14px;color:#C77DBB;font-family:'Liberation Mono',monospace;letter-spacing:-0.401px;">espresso</span>
<span style="left:868.00px;top:237.57px;height:22px;line-height:22px;font-size:14px;color:#BCBEC4;font-family:'Liberation Mono',monospace;letter-spacing:-0.401px;">.</span>
<span style="left:876.00px;top:237.57px;height:22px;line-height:22px;font-size:14px;color:#C77DBB;font-family:'Liberation Mono',monospace;letter-spacing:-0.401px;">core</span>
<span style="left:556.00px;top:281.57px;height:22px;line-height:22px;font-size:14px;color:#BCBEC4;font-family:'Liberation Mono',monospace;letter-spacing:-0.401px;">implementation libs.</span>
<span style="left:716.00px;top:281.57px;height:22px;line-height:22px;font-size:14px;color:#C77DBB;font-family:'Liberation Mono',monospace;letter-spacing:-0.401px;">circleimageview</span>
<span style="left:556.00px;top:347.57px;height:22px;line-height:22px;font-size:14px;color:#BCBEC4;font-family:'Liberation Mono',monospace;letter-spacing:-0.401px;">implementation libs.</span>
<span style="left:716.00px;top:347.57px;height:22px;line-height:22px;font-size:14px;color:#C77DBB;font-family:'Liberation Mono',monospace;letter-spacing:-0.401px;">viewpager2</span>
<span style="left:556.00px;top:391.57px;height:22px;line-height:22px;font-size:14px;color:#7A7E85;font-family:'Liberation Mono',monospace;letter-spacing:-0.401px;">// Picasso for loading images from URL</span>
<span style="left:556.00px;top:413.57px;height:22px;line-height:22px;font-size:14px;color:#BCBEC4;font-family:'Liberation Mono',monospace;letter-spacing:-0.401px;">implementation libs.</span>
<span style="left:716.00px;top:413.57px;height:22px;line-height:22px;font-size:14px;color:#C77DBB;font-family:'Liberation Mono',monospace;letter-spacing:-0.401px;">picasso</span>
<span style="left:556.00px;top:457.57px;height:22px;line-height:22px;font-size:14px;color:#7A7E85;font-family:'Liberation Mono',monospace;letter-spacing:-0.401px;">// Circle Indicator for slider dots</span>
<span style="left:556.00px;top:479.57px;height:22px;line-height:22px;font-size:14px;color:#BCBEC4;font-family:'Liberation Mono',monospace;letter-spacing:-0.401px;">implementation libs.</span>
<span style="left:716.00px;top:479.57px;height:22px;line-height:22px;font-size:14px;color:#C77DBB;font-family:'Liberation Mono',monospace;letter-spacing:-0.401px;">circleindicator</span>
<span style="left:556.00px;top:523.57px;height:22px;line-height:22px;font-size:14px;color:#BCBEC4;font-family:'Liberation Mono',monospace;letter-spacing:-0.401px;">implementation </span>
<span style="left:676.00px;top:523.57px;height:22px;line-height:22px;font-size:14px;color:#6AAB73;font-family:'Liberation Mono',monospace;letter-spacing:-0.401px;">"androidx.fragment:fragment:1.6.2"</span>
<span style="left:556.00px;top:567.57px;height:22px;line-height:22px;font-size:14px;color:#CF8E6D;font-family:'Liberation Mono',monospace;letter-spacing:-0.401px;">def</span>
<span style="left:588.00px;top:567.57px;height:22px;line-height:22px;font-size:14px;color:#6F737A;font-family:'Liberation Mono',monospace;letter-spacing:-0.401px;">nav_version</span>
<div style="left:676.5px;top:567px;width:58px;height:19.5px;background:#2f3135;border-radius:4px;"></div>
<span style="left:682.50px;top:567.80px;height:18px;line-height:18px;font-size:13px;color:#868A91;letter-spacing:0.616px;">: String</span>
<span style="left:743.00px;top:567.57px;height:22px;line-height:22px;font-size:14px;color:#BCBEC4;font-family:'Liberation Mono',monospace;letter-spacing:-0.401px;">=</span>
<span style="left:759.00px;top:567.57px;height:22px;line-height:22px;font-size:14px;color:#6AAB73;font-family:'Liberation Mono',monospace;letter-spacing:-0.401px;">"2.7.7"</span>
<span style="left:823.00px;top:567.57px;height:22px;line-height:22px;font-size:14px;color:#7A7E85;font-family:'Liberation Mono',monospace;letter-spacing:-0.401px;">//</span>
<span style="left:847.00px;top:566.00px;height:22px;line-height:22px;font-size:13px;color:#7A7E85;font-family:'Liberation Mono','Noto Sans Bengali','FreeSans',monospace;overflow:hidden;width:39.0px;">সর্বশেষ</span>
<svg style="left:847.00px;top:583.40px" width="18.0" height="3.8" viewBox="0 0 18.0 3.8" fill="none" stroke="#5f8a4d" stroke-width="1.0" stroke-linejoin="round"><path d="M0.0 0.6L2.0 3.2L4.0 0.6L6.0 3.2L8.0 0.6L10.0 3.2L12.0 0.6L14.0 3.2L16.0 0.6L18.0 3.2"/></svg>
<span style="left:893.50px;top:566.00px;height:22px;line-height:22px;font-size:13px;color:#7A7E85;font-family:'Liberation Mono','Noto Sans Bengali','FreeSans',monospace;overflow:hidden;width:31.5px;">ভার্সন</span>
<svg style="left:903.50px;top:583.40px" width="20.5" height="3.8" viewBox="0 0 20.5 3.8" fill="none" stroke="#5f8a4d" stroke-width="1.0" stroke-linejoin="round"><path d="M0.0 0.6L2.0 3.2L4.0 0.6L6.0 3.2L8.0 0.6L10.0 3.2L12.0 0.6L14.0 3.2L16.0 0.6L18.0 3.2L20.0 0.6"/></svg>
<span style="left:931.70px;top:566.00px;height:22px;line-height:22px;font-size:13px;color:#7A7E85;font-family:'Liberation Mono','Noto Sans Bengali','FreeSans',monospace;overflow:hidden;width:37.3px;">ব্যবহার</span>
<svg style="left:931.70px;top:583.40px" width="17.8" height="3.8" viewBox="0 0 17.8 3.8" fill="none" stroke="#5f8a4d" stroke-width="1.0" stroke-linejoin="round"><path d="M0.0 0.6L2.0 3.2L4.0 0.6L6.0 3.2L8.0 0.6L10.0 3.2L12.0 0.6L14.0 3.2L16.0 0.6"/></svg>
<span style="left:976.40px;top:566.00px;height:22px;line-height:22px;font-size:13px;color:#7A7E85;font-family:'Liberation Mono','Noto Sans Bengali','FreeSans',monospace;overflow:hidden;width:30.6px;">করুন</span>
<svg style="left:976.40px;top:583.40px" width="29.6" height="3.8" viewBox="0 0 29.6 3.8" fill="none" stroke="#5f8a4d" stroke-width="1.0" stroke-linejoin="round"><path d="M0.0 0.6L2.0 3.2L4.0 0.6L6.0 3.2L8.0 0.6L10.0 3.2L12.0 0.6L14.0 3.2L16.0 0.6L18.0 3.2L20.0 0.6L22.0 3.2L24.0 0.6L26.0 3.2L28.0 0.6"/></svg>
<span style="left:556.00px;top:589.57px;height:22px;line-height:22px;font-size:14px;color:#BCBEC4;font-family:'Liberation Mono',monospace;letter-spacing:-0.401px;">implementation libs.</span>
<span style="left:716.00px;top:589.57px;height:22px;line-height:22px;font-size:14px;color:#C77DBB;font-family:'Liberation Mono',monospace;letter-spacing:-0.401px;">navigation</span>
<span style="left:796.00px;top:589.57px;height:22px;line-height:22px;font-size:14px;color:#BCBEC4;font-family:'Liberation Mono',monospace;letter-spacing:-0.401px;">.</span>
<span style="left:804.00px;top:589.57px;height:22px;line-height:22px;font-size:14px;color:#C77DBB;font-family:'Liberation Mono',monospace;letter-spacing:-0.401px;">fragment</span>
<span style="left:556.00px;top:611.57px;height:22px;line-height:22px;font-size:14px;color:#BCBEC4;font-family:'Liberation Mono',monospace;letter-spacing:-0.401px;">implementation libs.</span>
<span style="left:716.00px;top:611.57px;height:22px;line-height:22px;font-size:14px;color:#C77DBB;font-family:'Liberation Mono',monospace;letter-spacing:-0.401px;">navigation</span>
<span style="left:796.00px;top:611.57px;height:22px;line-height:22px;font-size:14px;color:#BCBEC4;font-family:'Liberation Mono',monospace;letter-spacing:-0.401px;">.</span>
<span style="left:804.00px;top:611.57px;height:22px;line-height:22px;font-size:14px;color:#C77DBB;font-family:'Liberation Mono',monospace;letter-spacing:-0.401px;">ui</span>
<span style="left:556.00px;top:677.57px;height:22px;line-height:22px;font-size:14px;color:#BCBEC4;font-family:'Liberation Mono',monospace;letter-spacing:-0.401px;">implementation </span>
<span style="left:676.00px;top:677.57px;height:22px;line-height:22px;font-size:14px;color:#6AAB73;font-family:'Liberation Mono',monospace;letter-spacing:-0.401px;">'com.vanniktech:android-image-cropper:4.5.0'</span>
<span style="left:556.00px;top:743.57px;height:22px;line-height:22px;font-size:14px;color:#BCBEC4;font-family:'Liberation Mono',monospace;letter-spacing:-0.401px;">implementation </span>
<span style="left:676.00px;top:743.57px;height:22px;line-height:22px;font-size:14px;color:#6AAB73;font-family:'Liberation Mono',monospace;letter-spacing:-0.401px;">'com.itextpdf:itext7-core:7.2.5'</span>
<svg style="left:676.00px;top:539.40px" width="272.0" height="3.8" viewBox="0 0 272.0 3.8" fill="none" stroke="#A8963F" stroke-width="1.0" stroke-linejoin="round"><path d="M0.0 0.6L2.0 3.2L4.0 0.6L6.0 3.2L8.0 0.6L10.0 3.2L12.0 0.6L14.0 3.2L16.0 0.6L18.0 3.2L20.0 0.6L22.0 3.2L24.0 0.6L26.0 3.2L28.0 0.6L30.0 3.2L32.0 0.6L34.0 3.2L36.0 0.6L38.0 3.2L40.0 0.6L42.0 3.2L44.0 0.6L46.0 3.2L48.0 0.6L50.0 3.2L52.0 0.6L54.0 3.2L56.0 0.6L58.0 3.2L60.0 0.6L62.0 3.2L64.0 0.6L66.0 3.2L68.0 0.6L70.0 3.2L72.0 0.6L74.0 3.2L76.0 0.6L78.0 3.2L80.0 0.6L82.0 3.2L84.0 0.6L86.0 3.2L88.0 0.6L90.0 3.2L92.0 0.6L94.0 3.2L96.0 0.6L98.0 3.2L100.0 0.6L102.0 3.2L104.0 0.6L106.0 3.2L108.0 0.6L110.0 3.2L112.0 0.6L114.0 3.2L116.0 0.6L118.0 3.2L120.0 0.6L122.0 3.2L124.0 0.6L126.0 3.2L128.0 0.6L130.0 3.2L132.0 0.6L134.0 3.2L136.0 0.6L138.0 3.2L140.0 0.6L142.0 3.2L144.0 0.6L146.0 3.2L148.0 0.6L150.0 3.2L152.0 0.6L154.0 3.2L156.0 0.6L158.0 3.2L160.0 0.6L162.0 3.2L164.0 0.6L166.0 3.2L168.0 0.6L170.0 3.2L172.0 0.6L174.0 3.2L176.0 0.6L178.0 3.2L180.0 0.6L182.0 3.2L184.0 0.6L186.0 3.2L188.0 0.6L190.0 3.2L192.0 0.6L194.0 3.2L196.0 0.6L198.0 3.2L200.0 0.6L202.0 3.2L204.0 0.6L206.0 3.2L208.0 0.6L210.0 3.2L212.0 0.6L214.0 3.2L216.0 0.6L218.0 3.2L220.0 0.6L222.0 3.2L224.0 0.6L226.0 3.2L228.0 0.6L230.0 3.2L232.0 0.6L234.0 3.2L236.0 0.6L238.0 3.2L240.0 0.6L242.0 3.2L244.0 0.6L246.0 3.2L248.0 0.6L250.0 3.2L252.0 0.6L254.0 3.2L256.0 0.6L258.0 3.2L260.0 0.6L262.0 3.2L264.0 0.6L266.0 3.2L268.0 0.6L270.0 3.2L272.0 0.6"/></svg>
<svg style="left:676.00px;top:693.40px" width="352.0" height="3.8" viewBox="0 0 352.0 3.8" fill="none" stroke="#A8963F" stroke-width="1.0" stroke-linejoin="round"><path d="M0.0 0.6L2.0 3.2L4.0 0.6L6.0 3.2L8.0 0.6L10.0 3.2L12.0 0.6L14.0 3.2L16.0 0.6L18.0 3.2L20.0 0.6L22.0 3.2L24.0 0.6L26.0 3.2L28.0 0.6L30.0 3.2L32.0 0.6L34.0 3.2L36.0 0.6L38.0 3.2L40.0 0.6L42.0 3.2L44.0 0.6L46.0 3.2L48.0 0.6L50.0 3.2L52.0 0.6L54.0 3.2L56.0 0.6L58.0 3.2L60.0 0.6L62.0 3.2L64.0 0.6L66.0 3.2L68.0 0.6L70.0 3.2L72.0 0.6L74.0 3.2L76.0 0.6L78.0 3.2L80.0 0.6L82.0 3.2L84.0 0.6L86.0 3.2L88.0 0.6L90.0 3.2L92.0 0.6L94.0 3.2L96.0 0.6L98.0 3.2L100.0 0.6L102.0 3.2L104.0 0.6L106.0 3.2L108.0 0.6L110.0 3.2L112.0 0.6L114.0 3.2L116.0 0.6L118.0 3.2L120.0 0.6L122.0 3.2L124.0 0.6L126.0 3.2L128.0 0.6L130.0 3.2L132.0 0.6L134.0 3.2L136.0 0.6L138.0 3.2L140.0 0.6L142.0 3.2L144.0 0.6L146.0 3.2L148.0 0.6L150.0 3.2L152.0 0.6L154.0 3.2L156.0 0.6L158.0 3.2L160.0 0.6L162.0 3.2L164.0 0.6L166.0 3.2L168.0 0.6L170.0 3.2L172.0 0.6L174.0 3.2L176.0 0.6L178.0 3.2L180.0 0.6L182.0 3.2L184.0 0.6L186.0 3.2L188.0 0.6L190.0 3.2L192.0 0.6L194.0 3.2L196.0 0.6L198.0 3.2L200.0 0.6L202.0 3.2L204.0 0.6L206.0 3.2L208.0 0.6L210.0 3.2L212.0 0.6L214.0 3.2L216.0 0.6L218.0 3.2L220.0 0.6L222.0 3.2L224.0 0.6L226.0 3.2L228.0 0.6L230.0 3.2L232.0 0.6L234.0 3.2L236.0 0.6L238.0 3.2L240.0 0.6L242.0 3.2L244.0 0.6L246.0 3.2L248.0 0.6L250.0 3.2L252.0 0.6L254.0 3.2L256.0 0.6L258.0 3.2L260.0 0.6L262.0 3.2L264.0 0.6L266.0 3.2L268.0 0.6L270.0 3.2L272.0 0.6L274.0 3.2L276.0 0.6L278.0 3.2L280.0 0.6L282.0 3.2L284.0 0.6L286.0 3.2L288.0 0.6L290.0 3.2L292.0 0.6L294.0 3.2L296.0 0.6L298.0 3.2L300.0 0.6L302.0 3.2L304.0 0.6L306.0 3.2L308.0 0.6L310.0 3.2L312.0 0.6L314.0 3.2L316.0 0.6L318.0 3.2L320.0 0.6L322.0 3.2L324.0 0.6L326.0 3.2L328.0 0.6L330.0 3.2L332.0 0.6L334.0 3.2L336.0 0.6L338.0 3.2L340.0 0.6L342.0 3.2L344.0 0.6L346.0 3.2L348.0 0.6L350.0 3.2L352.0 0.6"/></svg>
<svg style="left:676.00px;top:759.40px" width="256.0" height="3.8" viewBox="0 0 256.0 3.8" fill="none" stroke="#A8963F" stroke-width="1.0" stroke-linejoin="round"><path d="M0.0 0.6L2.0 3.2L4.0 0.6L6.0 3.2L8.0 0.6L10.0 3.2L12.0 0.6L14.0 3.2L16.0 0.6L18.0 3.2L20.0 0.6L22.0 3.2L24.0 0.6L26.0 3.2L28.0 0.6L30.0 3.2L32.0 0.6L34.0 3.2L36.0 0.6L38.0 3.2L40.0 0.6L42.0 3.2L44.0 0.6L46.0 3.2L48.0 0.6L50.0 3.2L52.0 0.6L54.0 3.2L56.0 0.6L58.0 3.2L60.0 0.6L62.0 3.2L64.0 0.6L66.0 3.2L68.0 0.6L70.0 3.2L72.0 0.6L74.0 3.2L76.0 0.6L78.0 3.2L80.0 0.6L82.0 3.2L84.0 0.6L86.0 3.2L88.0 0.6L90.0 3.2L92.0 0.6L94.0 3.2L96.0 0.6L98.0 3.2L100.0 0.6L102.0 3.2L104.0 0.6L106.0 3.2L108.0 0.6L110.0 3.2L112.0 0.6L114.0 3.2L116.0 0.6L118.0 3.2L120.0 0.6L122.0 3.2L124.0 0.6L126.0 3.2L128.0 0.6L130.0 3.2L132.0 0.6L134.0 3.2L136.0 0.6L138.0 3.2L140.0 0.6L142.0 3.2L144.0 0.6L146.0 3.2L148.0 0.6L150.0 3.2L152.0 0.6L154.0 3.2L156.0 0.6L158.0 3.2L160.0 0.6L162.0 3.2L164.0 0.6L166.0 3.2L168.0 0.6L170.0 3.2L172.0 0.6L174.0 3.2L176.0 0.6L178.0 3.2L180.0 0.6L182.0 3.2L184.0 0.6L186.0 3.2L188.0 0.6L190.0 3.2L192.0 0.6L194.0 3.2L196.0 0.6L198.0 3.2L200.0 0.6L202.0 3.2L204.0 0.6L206.0 3.2L208.0 0.6L210.0 3.2L212.0 0.6L214.0 3.2L216.0 0.6L218.0 3.2L220.0 0.6L222.0 3.2L224.0 0.6L226.0 3.2L228.0 0.6L230.0 3.2L232.0 0.6L234.0 3.2L236.0 0.6L238.0 3.2L240.0 0.6L242.0 3.2L244.0 0.6L246.0 3.2L248.0 0.6L250.0 3.2L252.0 0.6L254.0 3.2L256.0 0.6"/></svg>
<span style="left:465.30px;top:127.20px;height:22px;line-height:22px;font-size:12px;color:#4B5059;font-family:'Liberation Mono',monospace;letter-spacing:-0.301px;">47</span>
<span style="left:465.30px;top:149.20px;height:22px;line-height:22px;font-size:12px;color:#4B5059;font-family:'Liberation Mono',monospace;letter-spacing:-0.301px;">48</span>
<span style="left:465.30px;top:171.20px;height:22px;line-height:22px;font-size:12px;color:#4B5059;font-family:'Liberation Mono',monospace;letter-spacing:-0.301px;">49</span>
<span style="left:465.30px;top:193.20px;height:22px;line-height:22px;font-size:12px;color:#4B5059;font-family:'Liberation Mono',monospace;letter-spacing:-0.301px;">50</span>
<span style="left:465.30px;top:215.20px;height:22px;line-height:22px;font-size:12px;color:#4B5059;font-family:'Liberation Mono',monospace;letter-spacing:-0.301px;">51</span>
<span style="left:465.30px;top:237.20px;height:22px;line-height:22px;font-size:12px;color:#4B5059;font-family:'Liberation Mono',monospace;letter-spacing:-0.301px;">52</span>
<span style="left:465.30px;top:259.20px;height:22px;line-height:22px;font-size:12px;color:#4B5059;font-family:'Liberation Mono',monospace;letter-spacing:-0.301px;">53</span>
<span style="left:465.30px;top:281.20px;height:22px;line-height:22px;font-size:12px;color:#4B5059;font-family:'Liberation Mono',monospace;letter-spacing:-0.301px;">54</span>
<span style="left:465.30px;top:303.20px;height:22px;line-height:22px;font-size:12px;color:#4B5059;font-family:'Liberation Mono',monospace;letter-spacing:-0.301px;">55</span>
<span style="left:465.30px;top:325.20px;height:22px;line-height:22px;font-size:12px;color:#4B5059;font-family:'Liberation Mono',monospace;letter-spacing:-0.301px;">56</span>
<span style="left:465.30px;top:347.20px;height:22px;line-height:22px;font-size:12px;color:#4B5059;font-family:'Liberation Mono',monospace;letter-spacing:-0.301px;">57</span>
<span style="left:465.30px;top:369.20px;height:22px;line-height:22px;font-size:12px;color:#4B5059;font-family:'Liberation Mono',monospace;letter-spacing:-0.301px;">58</span>
<span style="left:465.30px;top:391.20px;height:22px;line-height:22px;font-size:12px;color:#4B5059;font-family:'Liberation Mono',monospace;letter-spacing:-0.301px;">59</span>
<span style="left:465.30px;top:413.20px;height:22px;line-height:22px;font-size:12px;color:#4B5059;font-family:'Liberation Mono',monospace;letter-spacing:-0.301px;">60</span>
<span style="left:465.30px;top:435.20px;height:22px;line-height:22px;font-size:12px;color:#4B5059;font-family:'Liberation Mono',monospace;letter-spacing:-0.301px;">61</span>
<span style="left:465.30px;top:457.20px;height:22px;line-height:22px;font-size:12px;color:#4B5059;font-family:'Liberation Mono',monospace;letter-spacing:-0.301px;">62</span>
<span style="left:465.30px;top:479.20px;height:22px;line-height:22px;font-size:12px;color:#4B5059;font-family:'Liberation Mono',monospace;letter-spacing:-0.301px;">63</span>
<span style="left:465.30px;top:501.20px;height:22px;line-height:22px;font-size:12px;color:#4B5059;font-family:'Liberation Mono',monospace;letter-spacing:-0.301px;">64</span>
<span style="left:465.30px;top:523.20px;height:22px;line-height:22px;font-size:12px;color:#4B5059;font-family:'Liberation Mono',monospace;letter-spacing:-0.301px;">65</span>
<span style="left:465.30px;top:545.20px;height:22px;line-height:22px;font-size:12px;color:#4B5059;font-family:'Liberation Mono',monospace;letter-spacing:-0.301px;">66</span>
<span style="left:465.30px;top:567.20px;height:22px;line-height:22px;font-size:12px;color:#4B5059;font-family:'Liberation Mono',monospace;letter-spacing:-0.301px;">67</span>
<span style="left:465.30px;top:589.20px;height:22px;line-height:22px;font-size:12px;color:#4B5059;font-family:'Liberation Mono',monospace;letter-spacing:-0.301px;">68</span>
<span style="left:465.30px;top:611.20px;height:22px;line-height:22px;font-size:12px;color:#4B5059;font-family:'Liberation Mono',monospace;letter-spacing:-0.301px;">69</span>
<span style="left:465.30px;top:633.20px;height:22px;line-height:22px;font-size:12px;color:#4B5059;font-family:'Liberation Mono',monospace;letter-spacing:-0.301px;">70</span>
<span style="left:465.30px;top:655.20px;height:22px;line-height:22px;font-size:12px;color:#4B5059;font-family:'Liberation Mono',monospace;letter-spacing:-0.301px;">71</span>
<span style="left:465.30px;top:677.20px;height:22px;line-height:22px;font-size:12px;color:#4B5059;font-family:'Liberation Mono',monospace;letter-spacing:-0.301px;">72</span>
<span style="left:465.30px;top:699.20px;height:22px;line-height:22px;font-size:12px;color:#4B5059;font-family:'Liberation Mono',monospace;letter-spacing:-0.301px;">73</span>
<span style="left:465.30px;top:721.20px;height:22px;line-height:22px;font-size:12px;color:#4B5059;font-family:'Liberation Mono',monospace;letter-spacing:-0.301px;">74</span>
<span style="left:465.30px;top:743.20px;height:22px;line-height:22px;font-size:12px;color:#4B5059;font-family:'Liberation Mono',monospace;letter-spacing:-0.301px;">75</span></div></div>
<div style="left:521px;top:141px;width:1px;height:623px;background:#313438;"></div>
<div style="left:1324px;top:141px;width:1px;height:623px;background:#393B40;"></div>
<div style="left:450px;top:140px;width:949px;height:1px;background:#393B40;"></div>
<span style="left:465.30px;top:119.70px;height:22px;line-height:22px;font-size:12px;color:#4B5059;font-family:'Liberation Mono',monospace;letter-spacing:-0.301px;">44</span>
<span style="left:524.00px;top:120.07px;height:22px;line-height:22px;font-size:14px;color:#BCBEC4;font-family:'Liberation Mono',monospace;letter-spacing:-0.401px;">dependencies {</span>
<svg style="left:1288px;top:124px" width="14" height="14" viewBox="0 0 14 14"><path d="M7 1.300 13.200 12.500H.8z" fill="#D6AE58" stroke="#D6AE58" stroke-width="1.200" stroke-linejoin="round"/><path d="M7 5v4" stroke="#1E1F22" stroke-width="1.500" stroke-linecap="round"/><circle cx="7" cy="11" r=".85" fill="#1E1F22"/></svg>
<span style="left:1304.50px;top:121.80px;height:20px;line-height:20px;font-size:13.5px;color:#BCBEC4;letter-spacing:-0.517px;">42</span>
<svg style="left:1327px;top:124px" width="14" height="15" viewBox="0 0 14 15" fill="none" stroke="#57965C" stroke-linecap="round" stroke-linejoin="round"><path d="M1.500 6.500 5 10l7-8" stroke-width="1.700"/><path d="M1 12.500l1.500 1 1.500-1 1.500 1 1.500-1 1.500 1 1.500-1" stroke-width=".9"/></svg>
<span style="left:1343.00px;top:121.80px;height:20px;line-height:20px;font-size:13.5px;color:#BCBEC4;">6</span>
<svg style="left:1359.50px;top:125.00px;" width="13" height="13" viewBox="0 0 16 16" fill="none" stroke="#B4B8BF" stroke-width="1.3" stroke-linecap="round" stroke-linejoin="round"><path d="M3.5 10.5 8 6 12.5 10.5"/></svg>
<svg style="left:1380.00px;top:125.00px;" width="13" height="13" viewBox="0 0 16 16" fill="none" stroke="#B4B8BF" stroke-width="1.3" stroke-linecap="round" stroke-linejoin="round"><path d="M3.5 6 8 10.5 12.5 6"/></svg>
<div style="left:1385px;top:464px;width:14px;height:2px;background:#BA9752;"></div>
<div style="left:1385px;top:499px;width:14px;height:2px;background:#BA9752;"></div>
<div style="left:1385px;top:514px;width:14px;height:2px;background:#BA9752;"></div>
<div style="left:1385px;top:529px;width:14px;height:2px;background:#BA9752;"></div>
<div style="left:1385px;top:539px;width:14px;height:2px;background:#BA9752;"></div>
<div style="left:1385px;top:548px;width:14px;height:2px;background:#BA9752;"></div>
<div style="left:1385px;top:569px;width:14px;height:2px;background:#BA9752;"></div>
<div style="left:1385px;top:574px;width:14px;height:2px;background:#BA9752;"></div>
<div style="left:1385px;top:579px;width:14px;height:2px;background:#BA9752;"></div>
<div style="left:1385px;top:584px;width:14px;height:2px;background:#BA9752;"></div>
<div style="left:1385px;top:588px;width:14px;height:2px;background:#BA9752;"></div>
<div style="left:1385px;top:594px;width:14px;height:2px;background:#BA9752;"></div>
<div style="left:1385px;top:599px;width:14px;height:2px;background:#BA9752;"></div>
<div style="left:1385px;top:609px;width:14px;height:2px;background:#BA9752;"></div>
<div style="left:1385px;top:624px;width:14px;height:2px;background:#BA9752;"></div>
<div style="left:1385px;top:634px;width:14px;height:2px;background:#BA9752;"></div>
<div style="left:1385px;top:639px;width:14px;height:2px;background:#BA9752;"></div>
<div style="left:1385px;top:644px;width:14px;height:2px;background:#BA9752;"></div>
<div style="left:1385px;top:649px;width:14px;height:2px;background:#BA9752;"></div>
<div style="left:1385px;top:654px;width:14px;height:2px;background:#BA9752;"></div>
<div style="left:1385px;top:659px;width:14px;height:2px;background:#BA9752;"></div>
<div style="left:1385px;top:674px;width:14px;height:2px;background:#BA9752;"></div>
<div style="left:1385px;top:679px;width:14px;height:2px;background:#BA9752;"></div>
<div style="left:1385px;top:694px;width:14px;height:2px;background:#BA9752;"></div>
<div style="left:1385px;top:699px;width:14px;height:2px;background:#BA9752;"></div>
<div style="left:1390px;top:374px;width:8.5px;height:144px;background:rgba(255,255,255,.21);"></div>
<svg style="left:1412.70px;top:53.45px;" width="16" height="16" viewBox="0 0 16 16" fill="none" stroke="#CED0D6" stroke-width="1.1" stroke-linecap="round" stroke-linejoin="round"><path d="M5.300 13.400H3.600A1.300 1.300 0 0 1 2.300 12.100V3.100A1.300 1.300 0 0 1 3.600 1.800h5.400A1.300 1.300 0 0 1 10.300 3.100V6" stroke="#CED0D6"/><path d="M5.300 3.800h2" stroke="#CED0D6"/><rect x="6" y="7.800" width="8.200" height="3.800" rx=".5" stroke="#B57BE0"/><path d="M6 13.100h5.300" stroke="#B57BE0"/></svg><div style="left:1424.1000000000001px;top:65.15px;width:4.2px;height:4.2px;background:#22E05E;border-radius:50%;"></div>
<span style="left:1432.50px;top:51.30px;height:20px;line-height:20px;font-size:14px;color:#DFE1E5;letter-spacing:-0.087px;">Medium Phone API 36.0</span>
<svg style="left:1592.00px;top:55.50px;" width="12" height="12" viewBox="0 0 16 16" fill="none" stroke="#8b8e95" stroke-width="1.2" stroke-linecap="round" stroke-linejoin="round"><path d="M4 4l8 8M12 4l-8 8"/></svg>
<svg style="left:1617.50px;top:53.00px;" width="16" height="16" viewBox="0 0 16 16" fill="none" stroke="#CED0D6" stroke-width="1.2" stroke-linecap="round" stroke-linejoin="round"><path d="M8 2v12M2 8h12"/></svg>
<div style="left:1400px;top:81px;width:479px;height:1px;background:#1E1F22;"></div>
<div style="left:1400px;top:79px;width:213px;height:3.2px;background:#3574F0;border-radius:0 1.500px 1.500px 0;"></div>
<svg style="left:1797.50px;top:52.50px;" width="17" height="17" viewBox="0 0 16 16" fill="none" stroke="#CED0D6" stroke-width="1.15" stroke-linecap="round" stroke-linejoin="round"><path d="M8 2.500H4A1.500 1.500 0 0 0 2.500 4v8A1.500 1.500 0 0 0 4 13.500h8a1.500 1.500 0 0 0 1.500-1.500V8.500M10 2.500h3.500V6M13.300 2.700 7.800 8.200"/></svg>
<svg style="left:1824.00px;top:53.00px;" width="16" height="16" viewBox="0 0 16 16" fill="none" stroke="#CED0D6" stroke-width="1.2" stroke-linecap="round" stroke-linejoin="round"><g fill="#CED0D6" stroke="none"><circle cx="8" cy="3" r="1.2"/><circle cx="8" cy="8" r="1.2"/><circle cx="8" cy="13" r="1.2"/></g></svg>
<div style="left:1851.5px;top:60.3px;width:13px;height:1.4px;background:#7b7e85;"></div>
<svg style="left:1412.00px;top:90.60px;" width="16" height="16" viewBox="0 0 16 16" fill="none" stroke="#CED0D6" stroke-width="1.15" stroke-linecap="round" stroke-linejoin="round"><path d="M8 2v6M4.800 4a5.500 5.500 0 1 0 6.400 0"/></svg>
<svg style="left:1436.50px;top:90.10px;" width="17" height="17" viewBox="0 0 16 16" fill="none" stroke="#CED0D6" stroke-width="1.1" stroke-linecap="round" stroke-linejoin="round"><path d="M2 6.200h2.300L7.500 3.500v9L4.300 9.800H2z"/><path d="M9.800 6a3 3 0 0 1 0 4M11.800 4a5.800 5.800 0 0 1 0 8"/></svg>
<svg style="left:1461.50px;top:90.10px;" width="17" height="17" viewBox="0 0 16 16" fill="none" stroke="#CED0D6" stroke-width="1.1" stroke-linecap="round" stroke-linejoin="round"><path d="M3 6.200h2.300L8.500 3.500v9L5.300 9.800H3z"/><path d="M10.800 6a3 3 0 0 1 0 4"/></svg>
<div style="left:1488px;top:90px;width:1px;height:19px;background:#43454A;"></div>
<svg style="left:1495.00px;top:89.60px;" width="18" height="18" viewBox="0 0 16 16" fill="none" stroke="#CED0D6" stroke-width="1.1" stroke-linecap="round" stroke-linejoin="round"><rect x="2.600" y="3.200" width="6.600" height="10" rx=".9" stroke="#CED0D6"/><path d="M4.900 4.900h2" stroke="#CED0D6"/><path d="M11 13.300c2.300-1 3.300-3.200 2.900-5.400-.3-1.900-1.500-3.200-3-3.900" stroke="#548AF7"/><path d="M12.600 2.400 10.700 3.900l1.700 1.800" stroke="#548AF7"/></svg>
<svg style="left:1520.70px;top:89.60px;" width="18" height="18" viewBox="0 0 16 16" fill="none" stroke="#CED0D6" stroke-width="1.1" stroke-linecap="round" stroke-linejoin="round"><rect x="8.800" y="3.200" width="6.600" height="10" rx=".9" stroke="#CED0D6"/><path d="M11.100 4.900h2" stroke="#CED0D6"/><path d="M7 13.300c-2.300-1-3.300-3.200-2.900-5.400.3-1.900 1.500-3.200 3-3.900" stroke="#548AF7"/><path d="M5.400 2.400 7.300 3.900 5.600 5.700" stroke="#548AF7"/></svg>
<div style="left:1547px;top:90px;width:1px;height:19px;background:#43454A;"></div>
<svg style="left:1556.00px;top:90.60px;" width="16" height="16" viewBox="0 0 16 16" fill="none" stroke="#CED0D6" stroke-width="1.1" stroke-linecap="round" stroke-linejoin="round"><path d="M11 3.500v9L3.500 8z"/></svg>
<svg style="left:1582.00px;top:90.60px;" width="16" height="16" viewBox="0 0 16 16" fill="none" stroke="#CED0D6" stroke-width="1.1" stroke-linecap="round" stroke-linejoin="round"><circle cx="8" cy="8" r="4.800"/></svg>
<svg style="left:1608.00px;top:90.60px;" width="16" height="16" viewBox="0 0 16 16" fill="none" stroke="#CED0D6" stroke-width="1.1" stroke-linecap="round" stroke-linejoin="round"><rect x="4" y="4" width="8" height="8" rx=".6"/></svg>
<div style="left:1632px;top:90px;width:1px;height:19px;background:#43454A;"></div>
<svg style="left:1641.00px;top:89.60px;" width="18" height="18" viewBox="0 0 16 16" fill="none" stroke="#CED0D6" stroke-width="1.05" stroke-linecap="round" stroke-linejoin="round"><path d="M8 13.500H4.800a1.300 1.300 0 0 1-1.300-1.300V3.800a1.300 1.300 0 0 1 1.300-1.300h4.400a1.300 1.300 0 0 1 1.300 1.300V7M6 4.300h2"/><circle cx="12" cy="11.500" r="1.100"/><path d="M12 8.300l2.700 1.600v3.200L12 14.700l-2.700-1.600V9.900z"/></svg>
<svg style="left:1666.00px;top:89.60px;" width="18" height="18" viewBox="0 0 16 16" fill="none" stroke="#CED0D6" stroke-width="1.05" stroke-linecap="round" stroke-linejoin="round"><rect x="1.500" y="3" width="12" height="7" rx="1"/><path d="M3.500 5.200h.1M5.500 5.200h.1M7.500 5.200h.1M9.500 5.200h.1M11.500 5.200h.1M4 7.500h5.500"/><rect x="10.800" y="8.300" width="3.700" height="6" rx="1.850" fill="#2B2D30"/><path d="M12.650 9.600v1.200"/></svg>
<div style="left:1691px;top:90px;width:1px;height:19px;background:#43454A;"></div>
<svg style="left:1699.00px;top:89.60px;" width="18" height="18" viewBox="0 0 16 16" fill="none" stroke="#CED0D6" stroke-width="1.1" stroke-linecap="round" stroke-linejoin="round"><path d="M2 5.800A1.300 1.300 0 0 1 3.300 4.500h1.900l1-1.700h3.600l1 1.700h1.900A1.300 1.300 0 0 1 14 5.800v6.400a1.300 1.300 0 0 1-1.300 1.300H3.300A1.300 1.300 0 0 1 2 12.200z"/><circle cx="8" cy="8.800" r="2.300"/><path d="M11.500 6.500h.8"/></svg>
<svg style="left:1725.00px;top:89.60px;" width="18" height="18" viewBox="0 0 16 16" fill="none" stroke="#CED0D6" stroke-width="1.1" stroke-linecap="round" stroke-linejoin="round"><rect x="1.500" y="4.200" width="9" height="7.600" rx="1.300"/><path d="M10.500 7.200 14.500 5v6l-4-2.200"/></svg>
<div style="left:1750px;top:90px;width:1px;height:19px;background:#43454A;"></div>
<svg style="left:1758.50px;top:90.10px;" width="17" height="17" viewBox="0 0 16 16" fill="none" stroke="#CED0D6" stroke-width="1.15" stroke-linecap="round" stroke-linejoin="round"><path d="M8 10.500V2.500M5 5.200 8 2.300l3 2.900M2.500 10.500V13a.5.500 0 0 0 .5.500h10a.5.500 0 0 0 .5-.5v-2.500"/></svg>
<svg style="left:1784.50px;top:90.10px;" width="17" height="17" viewBox="0 0 16 16" fill="none" stroke="#CED0D6" stroke-width="1.15" stroke-linecap="round" stroke-linejoin="round"><path d="M8 2.500v8M5 7.800 8 10.700l3-2.900M2.500 10.500V13a.5.500 0 0 0 .5.500h10a.5.500 0 0 0 .5-.5v-2.500"/></svg>
<div style="left:1809px;top:90px;width:1px;height:19px;background:#43454A;"></div>
<svg style="left:1850.00px;top:89.60px;" width="18" height="18" viewBox="0 0 16 16" fill="none" stroke="#CED0D6" stroke-width="1.05" stroke-linecap="round" stroke-linejoin="round"><path d="M4.500 10.500H3.300A1.300 1.300 0 0 1 2 9.200V3.300A1.300 1.300 0 0 1 3.300 2h8.400A1.300 1.300 0 0 1 13 3.300v.7"/><path d="M8.500 12.500H5.800a1.300 1.300 0 0 1-1.300-1.300V5.800a1.300 1.300 0 0 1 1.300-1.300h7.900A1.300 1.300 0 0 1 15 5.800v2.700"/><circle cx="11.800" cy="11.300" r="2"/><path d="M13.300 12.800l1.700 1.700"/></svg>
<svg style="left:1412.00px;top:115.00px;" width="16" height="16" viewBox="0 0 16 16" fill="none" stroke="#CED0D6" stroke-width="1.15" stroke-linecap="round" stroke-linejoin="round"><path d="M2.500 8a5.500 5.500 0 1 0 1.800-4.100M2.300 2v2.800h2.800M8 5v3.300h2.800"/></svg>
<svg style="left:1438.00px;top:115.00px;" width="16" height="16" viewBox="0 0 16 16" fill="none" stroke="#CED0D6" stroke-width="1.2" stroke-linecap="round" stroke-linejoin="round"><g fill="#CED0D6" stroke="none"><circle cx="8" cy="3" r="1.2"/><circle cx="8" cy="8" r="1.2"/><circle cx="8" cy="13" r="1.2"/></g></svg>
<div style="left:1400px;top:140px;width:479px;height:1px;background:#1E1F22;"></div>
<div style="left:1834px;top:634.8px;width:27.5px;height:108px;border:1px solid #393B40;border-radius:3px;"></div>
<svg style="left:1840.00px;top:642.00px;" width="15" height="15" viewBox="0 0 16 16" fill="none" stroke="#DFE1E5" stroke-width="1.1" stroke-linecap="round" stroke-linejoin="round"><path d="M8 2v12M2 8h12"/></svg>
<div style="left:1841px;top:675px;width:13px;height:1.2px;background:#5A5D63;"></div>
<span style="left:1840.00px;top:695.30px;height:14px;line-height:14px;font-size:11px;color:#CED0D6;font-weight:700;letter-spacing:-0.200px;">1:1</span>
<svg style="left:1839.75px;top:719.55px;" width="16.5" height="16.5" viewBox="0 0 16 16" fill="none" stroke="#5A5D63" stroke-width="1.05" stroke-linecap="round" stroke-linejoin="round"><rect x="2" y="3" width="12" height="10" rx="1.300"/><path d="M5 8V6h2.500M11 8.500v2H8.500"/></svg>
<div style="left:1499px;top:141px;width:280px;height:623px;background:#FFFFFF;"></div>
<div style="left:1499px;top:141px;width:280px;height:60px;background:#694FA3;"></div>
<span style="left:1511.00px;top:143.30px;height:12px;line-height:12px;font-size:9.3px;color:#fff;letter-spacing:-0.021px;">11:34</span>
<svg style="left:1537px;top:144px" width="9" height="10" viewBox="0 0 9 10" fill="none" stroke="#fff" stroke-width="1"><path d="M4.500 .8 8 2.200v2.600c0 2-1.400 3.500-3.500 4.400C2.400 8.300 1 6.800 1 4.800V2.200zM2 2.500l4.500 5"/></svg>
<svg style="left:1552px;top:144.500px" width="8" height="9" viewBox="0 0 8 9"><path d="M2.500 0H7a1 1 0 0 1 1 1v7a1 1 0 0 1-1 1H1a1 1 0 0 1-1-1V2.500z" fill="#fff"/></svg>
<svg style="left:1730px;top:144.500px" width="10" height="8" viewBox="0 0 10 8"><path d="M5 8 0 1.800C1.400.7 3.100 0 5 0s3.600.7 5 1.800z" fill="#fff"/></svg>
<svg style="left:1741.500px;top:144.500px" width="8" height="8" viewBox="0 0 8 8"><path d="M8 0v8H0z" fill="#fff"/><path d="M6.800 3v3.800H3z" fill="#694FA3"/></svg>
<svg style="left:1754px;top:143.800px" width="6" height="9" viewBox="0 0 6 9"><path d="M2 0h2v1h1.200c.4 0 .8.400.8.800V8.200c0 .4-.4.800-.8.800H.8C.4 9 0 8.600 0 8.200V1.800C0 1.400.4 1 .8 1H2z" fill="#fff"/></svg>
<div style="left:1511.5px;top:175px;width:12.5px;height:1.4px;background:#fff;"></div>
<div style="left:1511.5px;top:178.6px;width:12.5px;height:1.4px;background:#fff;"></div>
<div style="left:1511.5px;top:182.2px;width:12.5px;height:1.4px;background:#fff;"></div>
<span style="left:1540.00px;top:169.80px;height:20px;line-height:20px;font-size:15px;color:#fff;letter-spacing:0.571px;">DocuMaster</span>
<div style="left:1507px;top:209px;width:264px;height:134px;border-radius:8px;box-shadow:0 1px 3px rgba(0,0,0,.3);"></div>
<svg style="left:1507px;top:209px;border-radius:8px;" width="264" height="134" viewBox="0 0 264 134"><defs>
<linearGradient id="bg" x1="0" y1="0" x2="0" y2="1"><stop offset="0" stop-color="#f3f6fb"/><stop offset=".15" stop-color="#e6edf5"/><stop offset=".3" stop-color="#b5c8db"/><stop offset=".43" stop-color="#88a3bf"/><stop offset=".6" stop-color="#53769c"/><stop offset=".8" stop-color="#2a4c76"/><stop offset="1" stop-color="#183357"/></linearGradient>
<linearGradient id="wv" x1="0" y1="0" x2="1" y2="1"><stop offset="0" stop-color="#f2f6fb"/><stop offset="1" stop-color="#a6d1ea"/></linearGradient>
<linearGradient id="top" x1="0" y1="0" x2="1" y2="1"><stop offset="0" stop-color="#f1f5fa"/><stop offset="1" stop-color="#d3deeb"/></linearGradient>
<radialGradient id="gl" cx=".5" cy=".5" r=".5"><stop offset="0" stop-color="#3fa0ff" stop-opacity=".95"/><stop offset=".5" stop-color="#2b7de0" stop-opacity=".45"/><stop offset="1" stop-color="#2b7de0" stop-opacity="0"/></radialGradient>
<linearGradient id="pp" x1="0" y1="0" x2="0" y2="1"><stop offset="0" stop-color="#f4f7fb"/><stop offset="1" stop-color="#cfd9e6"/></linearGradient>
</defs>
<rect width="264" height="134" fill="url(#bg)"/>
<path d="M0 0H264V22C240 20 218 36 190 38 156 40 128 30 96 34 70 37 52 46 36 44 22 30 12 16 0 12z" fill="#eef3f9" opacity=".8"/>
<path d="M0 11C10 12 20 22 26 32 30 40 36 43 40 46 26 50 10 48 0 46z" fill="#a3c1db" opacity=".85"/>
<path d="M264 0v30c-20-4-36 2-52 8 12-14 28-30 52-38z" fill="url(#wv)" opacity=".95"/>
<path d="M206 0h58v4C244 8 226 6 206 0z" fill="#eef5fb" opacity=".6"/>
<ellipse cx="42" cy="116" rx="34" ry="6" fill="url(#gl)"/>
<ellipse cx="226" cy="119" rx="32" ry="5.500" fill="url(#gl)"/>
<!-- paper -->
<path d="M42.600 77 68.800 66 115.500 79 95 86.500 67.400 96z" fill="url(#pp)"/>
<g stroke="#aebbd0" stroke-width=".5"><path d="M50 77.500 75 88M54 75.800 79 86.300M58 74.100 83 84.600M62 72.400 87 82.900M66 70.700 91 81.200M70 69 95 79.500"/></g>
<!-- scanner -->
<path d="M61.500 48.500 64.500 61.500 133.500 93.500 139 70z" fill="#c3d0e2"/>
<path d="M139 70 192 53 192 66 138.500 94.500z" fill="#aebfd6"/>
<path d="M61.500 48.500Q62 46.500 66 45.300L110 34.800Q114 34 118 35L189 50.500Q192.500 51.500 192 53.500L141 70.500Q138 71.300 135 70.300z" fill="url(#top)"/>
<path d="M66 57.300 117 75.500 117 84 66.600 64z" fill="#162a48"/>
<path d="M67 58.300 116.300 76.300" stroke="#5fd6ff" stroke-width="1.100" opacity=".9"/>
<path d="M69 62 112 80" stroke="#2d7fd0" stroke-width="1.300" opacity=".8"/>
<path d="M144.700 74.700 188.400 58.700 188.400 66.500 146 88.500z" fill="#13294a"/>
<path d="M144.700 74.700 188.400 58.700" stroke="#7fdcff" stroke-width=".9"/>
<path d="M127.200 58.700 165 47 176.800 50.700 140.300 62.400z" fill="#2f4567"/>
<ellipse cx="153" cy="53.800" rx="4.500" ry="1.700" fill="none" stroke="#3fb8e8" stroke-width=".8"/>
<path d="M146 62.500l22-7" stroke="#50688c" stroke-width="1.400" stroke-dasharray="2.500 1.500"/>
<path d="M73 52 104 59" stroke="#61d9e8" stroke-width=".8"/>
<circle cx="123" cy="72.300" r="1.300" fill="#2fb4ee" stroke="#dff4ff" stroke-width=".5"/>
<path d="M84 43 152 58M96 40 162 54" stroke="#b7c4d6" stroke-width=".4" stroke-dasharray="1 1"/>
<!-- waves -->
<g fill="none" stroke="#64c8f2" stroke-width=".9" opacity=".8"><path d="M172 66c10 2 14 10 22 12s10 8 16 10"/><path d="M170 70c10 3 13 11 21 13s11 9 17 11"/><path d="M166 75c10 3 14 10 22 13s10 9 18 11"/><path d="M162 80c10 3 13 9 21 12s12 8 20 10"/><path d="M175 62c9 1 14 7 21 9s9 7 14 9"/></g>
<g fill="#8fd8f7" opacity=".6"><circle cx="196" cy="72" r=".6"/><circle cx="201" cy="80" r=".6"/><circle cx="190" cy="92" r=".6"/><circle cx="199" cy="98" r=".6"/><circle cx="185" cy="98" r=".5"/><circle cx="193" cy="104" r=".5"/><circle cx="202" cy="68" r=".5"/><circle cx="180" cy="94" r=".5"/></g>
<!-- pdf label on scanner -->
<path d="M156.300 71.800 170.900 68.200 171.600 75.500 157.100 79.900z" fill="#e0252c"/>
<text x="158.300" y="77.800" font-family="Liberation Sans,sans-serif" font-weight="700" font-size="5" fill="#fff" transform="rotate(-15 158 77)">PDF</text>
<!-- image icon -->
<path d="M24.400 77.500Q24.400 75 27 76L50 84.500Q54.300 86.300 54.300 90L53.500 113Q53.300 116.500 50 115.300L28 107Q25.800 106 25.800 103.500z" fill="#dbe5f1"/>
<path d="M27.500 80.500 50.500 89.500 50 111.500 28.500 103.500z" fill="#c7d6ea"/>
<path d="M28.500 103.500 35 92 40.500 100.500 45 95.500 50 106.500 50 111.500z" fill="#5580c8"/>
<circle cx="42.600" cy="90.800" r="2" fill="#f6a821"/>
<!-- progress + arrow -->
<rect x="84" y="96.300" width="66" height="4.800" rx="2.400" fill="#2a4b74" stroke="#8fdcf8" stroke-width=".7"/>
<rect x="85.200" y="97.300" width="27.500" height="2.800" rx="1.400" fill="#dff3fc"/>
<path d="M151.500 98.800h15" stroke="#9be3fb" stroke-width="1.100"/>
<path d="M165.800 93 172.600 98.800 165.800 104.600z" fill="#9be3fb"/>
<!-- pdf docs -->
<path d="M204.500 70 207.500 69.200 207.500 114 204.500 112.700z" fill="#c9d3e0"/>
<path d="M207.500 69.200 210.500 68.400 210.500 115.300 207.500 114z" fill="#dbe3ed"/>
<path d="M210.500 68.200 229 63.300 236 68.800 236 106.800 212.500 116.200 210.500 115.300z" fill="#f1f4f8"/>
<path d="M229 63.300 229.500 69.500 236 68.800z" fill="#c8d2df"/>
<g stroke="#b4c0d0" stroke-width=".5"><path d="M214 73.500 232 68.800M214 76.500 232 71.800M214 79.500 232 74.800M214 82.500 232 77.800M214 100.500 232 95.800M214 103.500 232 98.800M214 106.500 232 101.800M214 109.500 232 104.800"/></g>
<path d="M216.900 87.100 233.600 82.800 233.600 92.300 216.900 96.600z" fill="#e0252c"/>
<text x="219.300" y="94.300" font-family="Liberation Sans,sans-serif" font-weight="700" font-size="6" fill="#fff" transform="rotate(-14.500 219 94)">PDF</text>
<!-- titles -->
<text x="133" y="17.200" text-anchor="middle" font-family="Liberation Sans,sans-serif" font-weight="700" font-size="9.600" fill="#1b3660" textLength="124" lengthAdjust="spacingAndGlyphs">Scanner &amp; Image to PDF -</text>
<text x="130" y="28" text-anchor="middle" font-family="Liberation Sans,sans-serif" font-weight="700" font-size="9.600" fill="#1b3660" textLength="70" lengthAdjust="spacingAndGlyphs">- Just One Tap!</text>
<!-- dots -->
<g fill="#a9b7ca"><rect x="95.500" y="124.400" width="2.200" height="2.200"/><rect x="105.700" y="124.400" width="2.200" height="2.200"/><circle cx="116.800" cy="125.500" r="1.300"/><circle cx="137.100" cy="125.500" r="1.300"/><circle cx="147.300" cy="125.500" r="1.300"/><rect x="156.300" y="124.400" width="2.200" height="2.200"/><rect x="166.500" y="124.400" width="2.200" height="2.200"/></g>
<circle cx="127" cy="125.500" r="3" fill="#fff"/>
</svg>
<div style="left:1499px;top:350px;width:280px;height:34px;background:#FEF7FF;"></div>
<div style="left:1499px;top:383px;width:280px;height:1px;background:#DDD5E3;"></div>
<span style="left:1519.50px;top:361.80px;height:12px;line-height:12px;font-size:9.8px;color:#6750A4;letter-spacing:-0.016px;">Image Tools</span>
<div style="left:1520px;top:381.2px;width:51px;height:2px;background:#6750A4;border-radius:2px 2px 0 0;"></div>
<span style="left:1617.00px;top:361.80px;height:12px;line-height:12px;font-size:9.8px;color:#3b3840;letter-spacing:-0.128px;">PDF Tools</span>
<span style="left:1706.00px;top:361.80px;height:12px;line-height:12px;font-size:9.8px;color:#3b3840;letter-spacing:0.044px;">Smart Tools</span>
<div style="left:1507px;top:396px;width:82.3px;height:82px;border-radius:9px;background:linear-gradient(50deg,#3a4ef5 0%,#4560f8 50%,#5773fb 100%);box-shadow:0 1.500px 3px rgba(60,60,90,.45);"></div>
<svg style="left:1535.15px;top:415.200px" width="26" height="26" viewBox="0 0 20 20"><rect x="2.500" y="2.500" width="15" height="15" rx="1.300" fill="none" stroke="#fff" stroke-width="1.400"/><path d="M5 14.500 8.200 10.500 10.500 13.300 12.300 11.300 15 14.500z" fill="#fff"/></svg>
<span style="left:1522.40px;top:447.80px;height:12px;line-height:12px;font-size:8.7px;color:#fff;font-weight:700;letter-spacing:-0.330px;">Resize Image</span>
<div style="left:1597.8px;top:396px;width:82.3px;height:82px;border-radius:9px;background:linear-gradient(50deg,#3a4ef5 0%,#4560f8 50%,#5773fb 100%);box-shadow:0 1.500px 3px rgba(60,60,90,.45);"></div>
<svg style="left:1625.95px;top:415.200px" width="26" height="26" viewBox="0 0 20 20"><rect x="5.500" y="1.500" width="13" height="13" rx="1.300" fill="none" stroke="#fff" stroke-width="1.400"/><path d="M2 5v11.500A1.500 1.500 0 0 0 3.500 18H15" fill="none" stroke="#fff" stroke-width="1.400"/><path d="M8 11.500 10.500 8.500 12.300 10.700 13.600 9.300 16 11.500z" fill="#fff"/></svg>
<span style="left:1614.45px;top:447.80px;height:12px;line-height:12px;font-size:8.7px;color:#fff;font-weight:700;letter-spacing:-0.273px;">Batch Image</span>
<div style="left:1688px;top:396px;width:83px;height:82px;border-radius:9px;background:linear-gradient(50deg,#3a4ef5 0%,#4560f8 50%,#5773fb 100%);box-shadow:0 1.500px 3px rgba(60,60,90,.45);"></div>
<svg style="left:1716.5px;top:415.200px" width="26" height="26" viewBox="0 0 20 20"><path d="M2.500 2.500h15v15" fill="none" stroke="#fff" stroke-width="1.500" stroke-dasharray="1.500 2.300"/><path d="M2.500 2.500v5M12 17.500h5.500" fill="none" stroke="#fff" stroke-width="1.500" stroke-dasharray="1.500 2.300"/><rect x="2" y="9.500" width="8.500" height="8.500" fill="#fff"/><path d="M3.300 16.300 5.300 13.700 6.700 15.400 7.800 14.300 9.400 16.300z" fill="#4a63f5"/></svg>
<span style="left:1705.75px;top:447.80px;height:12px;line-height:12px;font-size:8.7px;color:#fff;font-weight:700;letter-spacing:-0.375px;">Size Reduce</span>
<div style="left:1499px;top:693px;width:280px;height:55px;background:#F3EDF7;"></div>
<div style="left:1499px;top:748px;width:280px;height:16px;background:#FEF7FF;"></div>
<div style="left:1512px;top:701px;width:44px;height:21.8px;background:#E8DEF8;border-radius:11px;"></div>
<svg style="left:1527.300px;top:704.700px" width="13" height="13" viewBox="0 0 13 13"><path d="M6.500 1 12 5.500V12H8.300V8H4.700v4H1V5.500z" fill="#5E4B9E"/></svg>
<span style="left:1522.50px;top:728.00px;height:12px;line-height:12px;font-size:8.5px;color:#5b4a9c;font-weight:700;letter-spacing:-0.039px;">Home</span>
<svg style="left:1597.500px;top:713.500px" width="13" height="13" viewBox="0 0 13 13" fill="#48454E"><rect x="0.3" y="0.3" width="3.600" height="3.600"/><rect x="4.7" y="0.3" width="3.600" height="3.600"/><rect x="9.100000000000001" y="0.3" width="3.600" height="3.600"/><rect x="0.3" y="4.7" width="3.600" height="3.600"/><rect x="4.7" y="4.7" width="3.600" height="3.600"/><rect x="9.100000000000001" y="4.7" width="3.600" height="3.600"/><rect x="0.3" y="9.100000000000001" width="3.600" height="3.600"/><rect x="4.7" y="9.100000000000001" width="3.600" height="3.600"/><rect x="9.100000000000001" y="9.100000000000001" width="3.600" height="3.600"/></svg>
<svg style="left:1666.500px;top:712.500px" width="15" height="16" viewBox="0 0 15 16" fill="none" stroke="#48454E" stroke-width="1.200"><path d="M1 4V1.800A.8.800 0 0 1 1.800 1H4M11 1h2.200a.8.800 0 0 1 .8.800V4M14 12v2.200a.8.800 0 0 1-.8.800H11M4 15H1.800a.8.800 0 0 1-.8-.8V12"/><rect x="3.800" y="3.800" width="7.400" height="8.400" rx=".6"/><path d="M5.500 6.300h4M5.500 8h4M5.500 9.700h4" stroke-width="1"/></svg>
<svg style="left:1736.500px;top:712.500px" width="15" height="15" viewBox="0 0 16 16"><path d="M6.500 1h3l.4 2 1.300.7 1.900-.7 1.500 2.600-1.500 1.300v1.400l1.500 1.300-1.500 2.600-1.900-.7-1.300.7-.4 2h-3l-.4-2-1.300-.7-1.900.7L1.400 9.600 2.900 8.300V6.900L1.400 5.600 2.900 3l1.900.7L6.100 3z" fill="#48454E"/><circle cx="8" cy="7.600" r="2.300" fill="#F3EDF7"/></svg>
<div style="left:1602px;top:755px;width:74px;height:2px;background:#5c5b61;border-radius:1px;"></div>
<span style="left:53.00px;top:775.00px;height:20px;line-height:20px;font-size:14px;color:#DFE1E5;letter-spacing:-0.283px;-webkit-text-stroke:.45px #DFE1E5;">Build</span>
<span style="left:111.00px;top:775.00px;height:20px;line-height:20px;font-size:14px;color:#DFE1E5;letter-spacing:-0.375px;">Sync</span>
<svg style="left:151.50px;top:780.50px;" width="11" height="11" viewBox="0 0 16 16" fill="none" stroke="#868a91" stroke-width="1.4" stroke-linecap="round" stroke-linejoin="round"><path d="M4 4l8 8M12 4l-8 8"/></svg>
<span style="left:184.00px;top:775.00px;height:20px;line-height:20px;font-size:14px;color:#DFE1E5;letter-spacing:0.041px;">Build Output</span>
<svg style="left:272.50px;top:780.50px;" width="11" height="11" viewBox="0 0 16 16" fill="none" stroke="#868a91" stroke-width="1.4" stroke-linecap="round" stroke-linejoin="round"><path d="M4 4l8 8M12 4l-8 8"/></svg>
<div style="left:172.5px;top:802.5px;width:120px;height:3px;background:#5A5D63;border-radius:1.500px;"></div>
<span style="left:305.00px;top:775.00px;height:20px;line-height:20px;font-size:14px;color:#DFE1E5;letter-spacing:-0.055px;">Build Analyzer</span>
<svg style="left:403.50px;top:780.50px;" width="11" height="11" viewBox="0 0 16 16" fill="none" stroke="#868a91" stroke-width="1.4" stroke-linecap="round" stroke-linejoin="round"><path d="M4 4l8 8M12 4l-8 8"/></svg>
<div style="left:41px;top:805px;width:1838px;height:1px;background:#1E1F22;"></div>
<svg style="left:52.00px;top:816.00px;" width="16" height="16" viewBox="0 0 16 16" fill="none" stroke="#CED0D6" stroke-width="1.1" stroke-linecap="round" stroke-linejoin="round"><path d="M2.200 2.800h7.300c2.300 0 3.900 1.200 4.500 3.200l-1.500.5c-.5-1.100-1.500-1.600-2.700-1.600H2.200z"/><path d="M6.300 5v8.300a1.450 1.450 0 0 0 2.900 0V5"/></svg>
<div style="left:50px;top:840px;width:20px;height:1px;background:#43454A;"></div>
<div style="left:54px;top:851px;width:12px;height:12px;background:#5A5D63;border-radius:1.500px;"></div>
<div style="left:50px;top:873px;width:20px;height:1px;background:#43454A;"></div>
<svg style="left:52.00px;top:882.00px;" width="16" height="16" viewBox="0 0 16 16" fill="none" stroke="#CED0D6" stroke-width="1.1" stroke-linecap="round" stroke-linejoin="round"><path d="M5.500 2.500h5M6.300 2.500v4.200L4.300 9.500h7.400L9.700 6.700V2.500M8 9.500v4.500"/></svg>
<svg style="left:51.00px;top:907.00px;" width="18" height="18" viewBox="0 0 16 16" fill="none" stroke="#CED0D6" stroke-width="1.05" stroke-linecap="round" stroke-linejoin="round"><path d="M1.500 8C3 5 5.300 3.800 8 3.800S13 5 14.500 8C13 11 10.700 12.200 8 12.200S3 11 1.500 8z"/><circle cx="8" cy="8" r="2.100"/></svg>
<svg style="left:65.500px;top:920.500px" width="4" height="4" viewBox="0 0 4 4"><path d="M4 0v4H0z" fill="#CED0D6"/></svg>
<svg style="left:93.50px;top:815.50px;" width="13" height="13" viewBox="0 0 16 16" fill="none" stroke="#B4B8BF" stroke-width="1.3" stroke-linecap="round" stroke-linejoin="round"><path d="M3.5 6 8 10.5 12.5 6"/></svg>
<svg style="left:113.00px;top:814.50px;" width="15" height="15" viewBox="0 0 16 16" fill="none" stroke="#57965C" stroke-width="1.7" stroke-linecap="round" stroke-linejoin="round"><path d="M2.500 8.500 6.300 12.300 13.500 4"/></svg>
<span style="left:132.00px;top:812.00px;height:20px;line-height:20px;font-size:14px;color:#DFE1E5;letter-spacing:-0.339px;-webkit-text-stroke:.45px #DFE1E5;">Build PDFandImageResizer:</span>
<span style="left:305.00px;top:812.00px;height:20px;line-height:20px;font-size:14px;color:#DFE1E5;letter-spacing:0.178px;">finished</span>
<span style="left:359.00px;top:812.00px;height:20px;line-height:20px;font-size:14px;color:#868A91;letter-spacing:-0.107px;">At 9/11/2025 11:33 PM</span>
<span style="left:588.00px;top:812.00px;height:20px;line-height:20px;font-size:12.5px;color:#6F737A;letter-spacing:-0.169px;">1 sec, 35 ms</span>
<svg style="left:132.50px;top:838.50px;" width="15" height="15" viewBox="0 0 16 16" fill="none" stroke="#CED0D6" stroke-width="1.15" stroke-linecap="round" stroke-linejoin="round"><path d="M8 2.500v7M5.200 7 8 9.800 10.800 7M2.500 10.500V13h11v-2.500"/></svg>
<span style="left:151.00px;top:836.00px;height:20px;line-height:20px;font-size:14px;color:#DFE1E5;letter-spacing:0.023px;">Download info</span>
<div style="left:673px;top:806px;width:1168px;height:196px;background:#1E1F22;"></div>
<span style="left:685.00px;top:805.57px;height:22px;line-height:22px;font-size:14px;color:#BCBEC4;font-family:'Liberation Mono',monospace;letter-spacing:-0.401px;">&gt; Task :app:packageDebug UP-TO-DATE</span>
<span style="left:685.00px;top:827.57px;height:22px;line-height:22px;font-size:14px;color:#BCBEC4;font-family:'Liberation Mono',monospace;letter-spacing:-0.401px;">&gt; Task :app:createDebugApkListingFileRedirect UP-TO-DATE</span>
<span style="left:685.00px;top:849.57px;height:22px;line-height:22px;font-size:14px;color:#BCBEC4;font-family:'Liberation Mono',monospace;letter-spacing:-0.401px;">&gt; Task :app:assembleDebug UP-TO-DATE</span>
<span style="left:685.00px;top:893.57px;height:22px;line-height:22px;font-size:14px;color:#BCBEC4;font-family:'Liberation Mono',monospace;letter-spacing:-0.401px;">BUILD SUCCESSFUL in 929ms</span>
<span style="left:685.00px;top:915.57px;height:22px;line-height:22px;font-size:14px;color:#BCBEC4;font-family:'Liberation Mono',monospace;letter-spacing:-0.401px;">35 actionable tasks: 35 up-to-date</span>
<span style="left:685.00px;top:959.57px;height:22px;line-height:22px;font-size:14px;color:#548AF7;font-family:'Liberation Mono',monospace;letter-spacing:-0.401px;text-decoration:underline;text-underline-offset:2.500px;text-decoration-thickness:1px;">Build Analyzer</span>
<span style="left:797.00px;top:959.57px;height:22px;line-height:22px;font-size:14px;color:#BCBEC4;font-family:'Liberation Mono',monospace;letter-spacing:-0.401px;"> results available</span>
<div style="left:1832px;top:968px;width:7.5px;height:34px;background:#4D4E51;"></div>
<svg style="left:1852.00px;top:816.50px;" width="16" height="16" viewBox="0 0 16 16" fill="none" stroke="#CED0D6" stroke-width="1.1" stroke-linecap="round" stroke-linejoin="round"><path d="M2 3.500h12M2 7.500h9.800a2.200 2.200 0 0 1 0 4.400H9.500M2 11.500h3.500M11 10l-1.700 1.900L11 13.800"/></svg>
<svg style="left:1852.00px;top:841.50px;" width="16" height="16" viewBox="0 0 16 16" fill="none" stroke="#CED0D6" stroke-width="1.1" stroke-linecap="round" stroke-linejoin="round"><path d="M2 4h5M2 8h5M2 13h12M11.500 2.500V10M8.800 7.500l2.700 2.700 2.700-2.700"/></svg>
<svg style="left:1852.00px;top:868.00px;" width="16" height="16" viewBox="0 0 16 16" fill="none" stroke="#CED0D6" stroke-width="1.1" stroke-linecap="round" stroke-linejoin="round"><path d="M2.500 4.500h11M6 4.500V3a.8.800 0 0 1 .8-.8h2.400A.8.800 0 0 1 10 3v1.500M3.800 4.500l.6 8.300a1 1 0 0 0 1 .9h5.200a1 1 0 0 0 1-.9l.6-8.300M6.700 7v4.200M9.300 7v4.200"/></svg>
<div style="left:14px;top:1012.7px;width:8px;height:8px;background:#25324D;border:1.300px solid #548AF7;border-radius:2.200px;"></div>
<span style="left:26.00px;top:1006.00px;height:20px;line-height:20px;font-size:14px;color:#A2A5AD;letter-spacing:-0.413px;">PDFandImageResizer</span>
<svg style="left:162.50px;top:1010.20px;" width="11" height="11" viewBox="0 0 16 16" fill="none" stroke="#9da0a8" stroke-width="1.4" stroke-linecap="round" stroke-linejoin="round"><path d="M6 3.5 10.5 8 6 12.5"/></svg>
<div style="left:181px;top:1012.7px;width:8px;height:8px;background:#25324D;border:1.300px solid #548AF7;border-radius:2.200px;"></div>
<span style="left:193.00px;top:1006.00px;height:20px;line-height:20px;font-size:14px;color:#A2A5AD;letter-spacing:-0.430px;">app</span>
<svg style="left:222.50px;top:1010.20px;" width="11" height="11" viewBox="0 0 16 16" fill="none" stroke="#9da0a8" stroke-width="1.4" stroke-linecap="round" stroke-linejoin="round"><path d="M6 3.5 10.5 8 6 12.5"/></svg>
<svg style="left:239.00px;top:1006.70px;" width="17" height="17" viewBox="0 0 16 16" fill="none" stroke="#B4B8BF" stroke-width="1.1" stroke-linecap="round" stroke-linejoin="round"><path d="M1.700 12.400C1.200 8.600 2.400 5.200 6.200 4.500 7.900 4.200 9.400 4.700 10.400 5.700 11.600 6.900 12.600 7.300 14.100 6.900 14.500 8.900 13.900 10.800 12.900 12.400H10.700L10.200 11.100C9.400 11.350 8.600 11.350 7.800 11.100L7.300 12.400H5.100L4.600 11.300 3.900 12.400Z"/><path d="M10.400 5.700C11 3.600 12.300 2.300 13.800 2.400 15.100 2.500 15.500 3.800 14.800 4.600 14.300 5.200 13.500 5.100 13.200 4.600"/><circle cx="11.400" cy="8.300" r=".5" fill="#CED0D6" stroke="none"/></svg>
<span style="left:260.00px;top:1006.00px;height:20px;line-height:20px;font-size:14px;color:#A2A5AD;letter-spacing:0.010px;">build.gradle</span>
<span style="left:1635.00px;top:1006.00px;height:20px;line-height:20px;font-size:14px;color:#A2A5AD;letter-spacing:-0.456px;">112:62</span>
<span style="left:1691.00px;top:1006.00px;height:20px;line-height:20px;font-size:13px;color:#A2A5AD;letter-spacing:-0.671px;">LF</span>
<span style="left:1722.00px;top:1006.00px;height:20px;line-height:20px;font-size:14px;color:#A2A5AD;letter-spacing:0.084px;">UTF-8</span>
<svg style="left:1775.500px;top:1004.500px" width="22" height="22" viewBox="0 0 19 19"><path d="M7.500 4C8 9 9.500 10.500 14.500 11 9.500 11.500 8 13 7.500 18 7 13 5.500 11.500 .5 11 5.500 10.500 7 9 7.500 4z" fill="#CED0D6"/><circle cx="13.500" cy="5" r="2.700" fill="#2B2D30" stroke="#CED0D6" stroke-width="1"/><path d="M11.700 6.800 15.300 3.200" stroke="#CED0D6" stroke-width="1"/></svg>
<span style="left:1814.50px;top:1006.00px;height:20px;line-height:20px;font-size:14px;color:#A2A5AD;letter-spacing:-0.148px;">4 spaces</span>
<svg style="left:1887.00px;top:1007.70px;" width="16" height="16" viewBox="0 0 16 16" fill="none" stroke="#B4B8BF" stroke-width="1.15" stroke-linecap="round" stroke-linejoin="round"><rect x="2.500" y="7.500" width="9" height="6.500" rx="1.300"/><path d="M9.500 7.500V5.300a2.300 2.300 0 0 1 4.600 0V6"/><path d="M7 10.300v1.200"/></svg>
<div style="left:0px;top:1032px;width:1920px;height:48px;background:linear-gradient(90deg,#24282a 0%,#22292c 18%,#1d2c35 30%,#1a2832 45%,#1b2730 62%,#1f2427 80%,#202325 100%);"></div>
<div style="left:0px;top:1032px;width:1920px;height:1px;background:#3a3e42;"></div>
<svg style="left:639px;top:1045px" width="23" height="23" viewBox="0 0 23 23"><defs><linearGradient id="wl" x1="0" y1="0" x2="1" y2="1"><stop offset="0" stop-color="#6ddcff"/><stop offset="1" stop-color="#1793ee"/></linearGradient></defs><g fill="url(#wl)"><rect x="0" y="0" width="11" height="11"/><rect x="12" y="0" width="11" height="11"/><rect x="0" y="12" width="11" height="11"/><rect x="12" y="12" width="11" height="11"/></g></svg>
<div style="left:675px;top:1040px;width:220px;height:32px;background:#39424a;border-radius:16px;border:1px solid #48515a;"></div>
<svg style="left:685.50px;top:1048.00px;" width="17" height="17" viewBox="0 0 16 16" fill="none" stroke="#e4e6e8" stroke-width="1.5" stroke-linecap="round" stroke-linejoin="round"><circle cx="7" cy="7" r="4.700"/><path d="M10.500 10.500l3.300 3.300"/></svg>
<span style="left:712.00px;top:1045.80px;height:20px;line-height:20px;font-size:13.5px;color:#dfe1e3;letter-spacing:-0.355px;">Search</span>
<svg style="left:843px;top:1043px" width="46" height="27" viewBox="0 0 46 27"><defs><radialGradient id="ct" cx=".55" cy=".8" r=".75"><stop offset="0" stop-color="#2a4fb0"/><stop offset=".7" stop-color="#1a2f7a"/><stop offset="1" stop-color="#1a2f7a" stop-opacity="0"/></radialGradient></defs><path d="M2 25C4 12 14 3 26 2 38 2 44 12 45 25z" fill="url(#ct)"/><rect x="25.500" y="0" width="2" height="25" fill="#8ea8ee" opacity=".85"/><rect x="28.500" y="0" width="2" height="25" fill="#7f9be6" opacity=".7"/><rect x="6" y="13" width="5" height="12" fill="#c9c3b8"/><rect x="12" y="18" width="5" height="7" fill="#d8c7a0"/><rect x="18" y="14" width="4" height="11" fill="#e3dccd"/><path d="M19 14l1-4 1 4z" fill="#e3dccd"/><rect x="23" y="19" width="3" height="6" fill="#b9b2a5"/><rect x="31" y="18" width="5" height="7" fill="#9fc0c8"/><rect x="37" y="15" width="4" height="10" fill="#d9d4c8"/><path d="M38 15l1-3.500 1 3.500z" fill="#d9d4c8"/><rect x="41" y="20" width="4" height="5" fill="#b8a07a"/><path d="M0 25c6-3 12-3 20-1.500S38 26 46 24v3H0z" fill="#b9c7b0" opacity=".8"/></svg>
<div style="left:907px;top:1051px;width:18px;height:16px;background:#6e7072;border-radius:2px;"></div>
<div style="left:913px;top:1045px;width:18px;height:16px;background:#f2f2f2;border-radius:2px;box-shadow:-1px 1px 2px rgba(0,0,0,.35);"></div>
<svg style="left:950px;top:1044px" width="25" height="24" viewBox="0 0 25 24"><defs><linearGradient id="cp1" x1="0" y1="0" x2="1" y2="1"><stop offset="0" stop-color="#2a7de1"/><stop offset=".5" stop-color="#6d5be8"/><stop offset="1" stop-color="#c55bd8"/></linearGradient><linearGradient id="cp2" x1="0" y1="0" x2="0" y2="1"><stop offset="0" stop-color="#35c3e8"/><stop offset=".35" stop-color="#7ad14a"/><stop offset=".65" stop-color="#f3c62a"/><stop offset="1" stop-color="#f0582e"/></linearGradient></defs><path d="M9 2h6c2 0 3 1 3.600 3l2.900 9c.8 2.500-.6 4.500-3 4.500H13c-2 0-3-1-3.600-3L7 7z" fill="url(#cp1)"/><path d="M7 5.500h5c2 0 3 1 3.600 3l1.400 5c.6 2-.5 3.500-2.500 3.500l-2 5H7c-2.400 0-3.800-2-3-4.500l1.700-8.500C6 7 6 5.500 7 5.500z" fill="url(#cp2)"/><path d="M11 8.500h3.500l2 7H13z" fill="#fff" opacity=".85"/></svg>
<svg style="left:994px;top:1044px" width="26" height="24" viewBox="0 0 26 24"><path d="M1 4.500A1.500 1.500 0 0 1 2.500 3H9l2.500 2.500H23A1.500 1.500 0 0 1 24.500 7v2H1z" fill="#e6a310"/><rect x="1" y="6.500" width="24" height="15.500" rx="1.500" fill="#fbc93a"/><rect x="1" y="16" width="24" height="6" rx="1.500" fill="#f0b524"/><rect x="6" y="15.500" width="14" height="6.500" rx="1.500" fill="#1e86d8"/><rect x="8.500" y="17.800" width="9" height="1.600" rx=".8" fill="#0f5fa8"/></svg>
<svg style="left:1038.500px;top:1043.500px" width="25" height="25" viewBox="0 0 25 25"><defs><linearGradient id="ed1" x1="0" y1="0" x2="1" y2="0"><stop offset="0" stop-color="#2a8fe0"/><stop offset=".5" stop-color="#36c5b0"/><stop offset="1" stop-color="#7fdc5a"/></linearGradient></defs><circle cx="12.500" cy="12.500" r="12" fill="#1463b8"/><path d="M.8 11.500C1.500 5 6.500.5 12.500.5c7 0 12 5 12 10.500 0 3.500-2.500 5.500-5.500 5.500-2.500 0-3.500-1.200-3.500-2.200 0-.8.800-1 .8-2.300 0-2-2-4-5-4C6.500 8 2 10.500.8 11.500z" fill="url(#ed1)"/><path d="M9.500 14c0 5 4 8.500 8.500 8.500 2 0 4-.8 5-2-1.500 3-5.500 4.300-10.500 4C7 24 2.500 20.500 1 14c1-3 4.500-4.800 7.500-4.800S13 10.500 13 12c-2 0-3.500.5-3.500 2z" fill="#0e4f9c"/></svg>
<svg style="left:1082px;top:1043px" width="25" height="26" viewBox="0 0 25 26"><path d="M7 7V4.500A2.500 2.500 0 0 1 9.500 2h6A2.500 2.500 0 0 1 18 4.500V7" fill="none" stroke="#2aa8e8" stroke-width="2"/><path d="M1 7h23v14.500a3 3 0 0 1-3 3H4a3 3 0 0 1-3-3z" fill="#f4f4f4"/><rect x="8" y="11" width="4" height="4" fill="#f25022"/><rect x="13" y="11" width="4" height="4" fill="#7fba00"/><rect x="8" y="16" width="4" height="4" fill="#00a4ef"/><rect x="13" y="16" width="4" height="4" fill="#ffb900"/></svg>
<svg style="left:1126.500px;top:1043.500px" width="25" height="25" viewBox="0 0 24 24"><circle cx="12" cy="12" r="11.500" fill="#fbc116"/><path d="M12 12 2.050 6.250A11.500 11.500 0 0 1 21.950 6.250z" fill="#e33b2e"/><path d="M2.050 6.250A11.500 11.500 0 0 0 12 23.500L17 14.900 12 12z" fill="#2da94f"/><path d="M2.050 6.250 7 14.900 12 12z" fill="#2da94f"/><path d="M12 6.250h9.950" stroke="#e33b2e" stroke-width=".1"/><circle cx="12" cy="12" r="5.400" fill="#f1f1f1"/><circle cx="12" cy="12" r="4.300" fill="#3f7fea"/></svg>
<div style="left:1136px;top:1072px;width:6px;height:2.5px;background:#8a8e92;border-radius:1.500px;"></div>
<svg style="left:1170.500px;top:1044px" width="25" height="24" viewBox="0 0 25 24"><path d="M18 .8 24 3.500v17L18 23.200 5 12z" fill="#2a8fdc"/><path d="M18 .8V23.200L24 20.500v-17z" fill="#39a6ee"/><path d="M1 8.200 3.200 6.500 18 17.500v5.700L1 8.200z" fill="#1573c0"/><path d="M1 15.800 3.200 17.500 18 6.500V.8z" fill="#1f86d4"/><path d="M18 6.500 10.500 12 18 17.500z" fill="#1b2730"/></svg>
<div style="left:1207px;top:1036.5px;width:40px;height:39px;background:rgba(255,255,255,.055);border-radius:4px;border:1px solid rgba(255,255,255,.06);"></div>
<svg style="left:1214.500px;top:1043.500px" width="25" height="25" viewBox="0 0 25 25"><circle cx="12.500" cy="12.500" r="12" fill="#f7f8fa" stroke="#e1e4e8" stroke-width=".8" stroke-dasharray="1.600 1"/><path d="M18 9.500 21 12.500 18 15.500z" fill="#3ddc84"/><path d="M12.500 5.500 6.500 19.500M12.500 5.500l6 14M8.500 14.500h8" fill="none" stroke="#3f7fe8" stroke-width="2.200" stroke-linecap="round"/><circle cx="12.500" cy="5" r="1.700" fill="#1d2b3a"/><path d="M12.500 2v2" stroke="#1d2b3a" stroke-width="1.200"/></svg>
<div style="left:1219px;top:1071.5px;width:16px;height:3px;background:#9db2e8;border-radius:1.500px;"></div>
<div style="left:1260px;top:1045px;width:22px;height:22px;background:#f4cf0e;border-radius:2.500px;"></div>
<svg style="left:1265px;top:1047px" width="12" height="12" viewBox="0 0 12 12"><circle cx="6" cy="6" r="5.500" fill="#fff"/><path d="M4.500 3.300 8.800 6 4.500 8.700z" fill="#f4cf0e"/></svg>
<span style="left:1263.00px;top:1059.50px;height:7px;line-height:7px;font-size:5.5px;color:#5a4a00;font-weight:700;letter-spacing:-0.103px;">Player</span>
<svg style="left:1726.00px;top:1049.50px;" width="14" height="14" viewBox="0 0 16 16" fill="none" stroke="#f0f0f0" stroke-width="1.6" stroke-linecap="round" stroke-linejoin="round"><path d="M3 10.500 8 5.500l5 5"/></svg>
<svg style="left:1756.50px;top:1047.50px;" width="17" height="17" viewBox="0 0 16 16" fill="none" stroke="#b8c6dc" stroke-width="1.2" stroke-linecap="round" stroke-linejoin="round"><path d="M13.500 2.500 2.500 7.300l5.300 1.300 1.600 5.400z"/></svg>
<svg style="left:1788px;top:1048px" width="18" height="15" viewBox="0 0 18 15" fill="none" stroke="#f0f0f0" stroke-width="1.300" stroke-linecap="round"><path d="M1.500 5.500a10.500 10.500 0 0 1 15 0M4 8.300a7 7 0 0 1 10 0M6.500 11a3.500 3.500 0 0 1 5 0"/><circle cx="9" cy="13.300" r="1" fill="#f0f0f0" stroke="none"/></svg>
<svg style="left:1812px;top:1048.500px" width="18" height="15" viewBox="0 0 18 15" fill="none" stroke="#f0f0f0" stroke-width="1.200" stroke-linejoin="round" stroke-linecap="round"><path d="M1.500 5.300h2.300L7.500 2v11L3.800 9.700H1.500z"/><path d="M10 5.300a3.200 3.200 0 0 1 0 4.400M12 3.300a6 6 0 0 1 0 8.400"/><path d="M14 1.500a8.500 8.500 0 0 1 0 12" stroke="#77797c"/></svg>
<span style="left:1851.70px;top:1041.30px;height:14px;line-height:14px;font-size:12px;color:#f2f2f2;letter-spacing:-0.268px;">11:34 PM</span>
<span style="left:1846.00px;top:1057.50px;height:14px;line-height:14px;font-size:12px;color:#f2f2f2;letter-spacing:0.226px;">9/11/2025</span>
</div></body></html>
